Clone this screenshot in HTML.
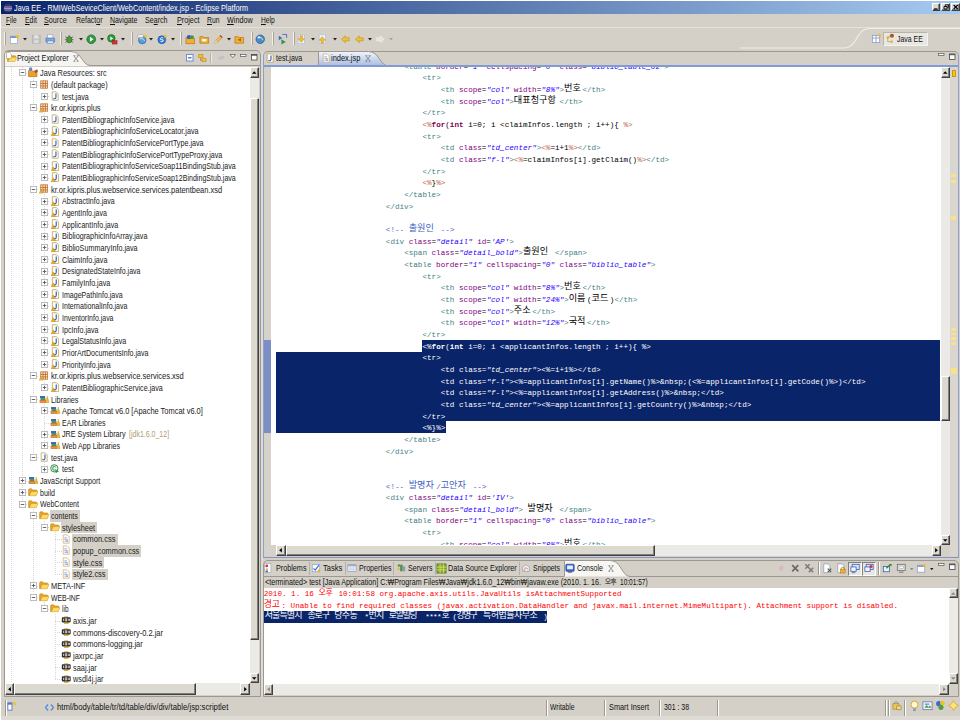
<!DOCTYPE html>
<html><head><meta charset="utf-8"><title>Java EE - Eclipse Platform</title>
<style>
html,body{margin:0;padding:0}
body{width:962px;height:722px;overflow:hidden;background:#fff;position:relative;font-family:"Liberation Sans",sans-serif;font-size:9px;color:#1c1c1c}
.b{position:absolute;box-sizing:border-box}
.t{position:absolute;white-space:pre;transform-origin:0 50%;line-height:12px;height:12px}
.t u{text-decoration:underline}
svg{position:absolute;overflow:visible}
.c{position:absolute;white-space:pre;font-family:"Liberation Mono",monospace;font-size:7.62px;line-height:11.66px;height:11.66px;color:#000;letter-spacing:0}
.k{display:inline-block;overflow:visible;vertical-align:top;font-family:"Liberation Sans","Noto Sans CJK KR",sans-serif;font-style:normal;font-weight:normal;height:11.66px;line-height:11.66px;text-align:left;white-space:nowrap;letter-spacing:0}
.kc{font-size:9.14px;line-height:6.6px}
.ka{font-size:9px;line-height:9.76px}
.tg{color:#3f7f7f}.an{color:#7f007f}.av{color:#2a00ff;font-style:italic}.cm{color:#3f5fbf}.sd{color:#bf5f3f}.kw{color:#7f0055;font-weight:bold}
.sel, .sel *{color:#fff !important}
.btn{position:absolute;box-sizing:border-box;background:#dcd9d1;border:1px solid;border-color:#fff #404040 #404040 #fff;box-shadow:inset -1px -1px 0 #808080}

</style></head>
<body>
<svg width="0" height="0" style="position:absolute">
<defs>
<symbol id="plus" viewBox="0 0 8 8"><rect x="0.500" y="0.500" width="7" height="7" fill="#fff" stroke="#b4b4b4" stroke-width="1"/><path d="M2 4h4M4 2v4" stroke="#555" stroke-width="1"/></symbol>
<symbol id="minus" viewBox="0 0 8 8"><rect x="0.500" y="0.500" width="7" height="7" fill="#fff" stroke="#b4b4b4" stroke-width="1"/><path d="M2 4h4" stroke="#555" stroke-width="1"/></symbol>
<symbol id="jfile" viewBox="0 0 10 12"><path d="M1.5 0.8h5l2.500 2.500v8h-7.500z" fill="#fffef4" stroke="#b89a58" stroke-width="0.9"/><path d="M6.2 3v4.600q0 1.800-1.600 1.800-1.100 0-1.500-0.700" fill="none" stroke="#2a5fc0" stroke-width="1.400"/></symbol>
<symbol id="jfilew" viewBox="0 0 10 12"><path d="M1.500 0.800h5l2.500 2.500v8h-7.500z" fill="#fffef4" stroke="#b89a58" stroke-width="0.900"/><path d="M6.200 3v4.600q0 1.800-1.600 1.800-1.100 0-1.500-0.700" fill="none" stroke="#2a5fc0" stroke-width="1.400"/><path d="M0 12l2.600-5 2.600 5z" fill="#f0b020" stroke="#c08000" stroke-width="0.500"/></symbol>
<symbol id="pkg" viewBox="0 0 11 11"><rect x="2" y="1" width="8" height="8.500" fill="#fbe9c4" stroke="#c07830" stroke-width="1"/><path d="M2 4h8M2 6.800h8M4.700 1v8.500M7.400 1v8.500" stroke="#b8602a" stroke-width="0.900"/><path d="M0 11l2.300-4.600 2.300 4.600z" fill="#f0b020" stroke="#c88a10" stroke-width="0.400"/></symbol>
<symbol id="pkgn" viewBox="0 0 11 11"><rect x="2" y="1" width="8" height="8.500" fill="#fbe9c4" stroke="#c07830" stroke-width="1"/><path d="M2 4h8M2 6.800h8M4.700 1v8.500M7.400 1v8.500" stroke="#b8602a" stroke-width="0.900"/></symbol>
<symbol id="fold" viewBox="0 0 12 10"><path d="M0.500 2.500q0-1.500 1.200-1.500h2.500l1 1.300h4.300q0.800 0 0.800 0.800v1h-6.500l-2.300 4.900h-1z" fill="#eaa428" stroke="#b87c10" stroke-width="0.600"/><path d="M3.600 4.200h8l-2.300 5.100h-8z" fill="#ffdc6a" stroke="#c89018" stroke-width="0.600"/></symbol>
<symbol id="jar" viewBox="0 0 12 10"><path d="M3.500 0.300h5v1h-5zM2.500 8h7l-1 2h-5z" fill="#e8b030"/><rect x="0.500" y="1.500" width="11" height="6.500" rx="1" fill="#2c2c2c"/><path d="M2.600 3.300v3M4.800 3.300h1.600v3h-1.600zM8.500 3.300v3M10 3.300v3" stroke="#f4f4f4" stroke-width="0.900" fill="none"/></symbol>
<symbol id="css" viewBox="0 0 10 12"><path d="M1.500 0.800h5l2.500 2.500v8h-7.500z" fill="#fffdf6" stroke="#c8ac78" stroke-width="0.900"/><path d="M3 4.500h3M3 6.500h4" stroke="#6a8fd8" stroke-width="0.900"/><path d="M3 8.700h2" stroke="#d870a0" stroke-width="0.900"/><circle cx="6.300" cy="8.600" r="1.100" fill="#5a8ae0"/></symbol>
<symbol id="lib" viewBox="0 0 12 10"><rect x="1" y="1.200" width="6" height="2.600" fill="#3a6ab8"/><rect x="1.600" y="3.600" width="5.800" height="2.400" fill="#3f9a55"/><rect x="0.600" y="5.800" width="7.600" height="3.400" fill="#d86a28"/><path d="M0.600 7.400h7.600" stroke="#f0c070" stroke-width="0.700"/><path d="M8 9.200l1.500-8 2.300 8z" fill="#f0b428" stroke="#c88a10" stroke-width="0.400"/></symbol>
<symbol id="cls" viewBox="0 0 11 11"><circle cx="5" cy="5" r="4.200" fill="#eaf6ea" stroke="#2e8a45" stroke-width="1.100"/><path d="M6.600 3.600q-0.600-0.800-1.700-0.800-1.800 0-1.800 2.200t1.800 2.200q1.100 0 1.700-0.800" fill="none" stroke="#2e8a45" stroke-width="1.100"/><path d="M6.500 6.500l4 2-4 2.300z" fill="#2e9a4e"/></symbol>
<symbol id="jres" viewBox="0 0 12 12"><path d="M0.500 5q0-1.500 1.200-1.500h2.500l1 1.300h4.300q0.800 0 0.800 0.800v5.400h-9.800z" fill="#e8a030" stroke="#a86a10" stroke-width="0.700"/><circle cx="3" cy="2.200" r="2" fill="#5a8ad0"/><path d="M7 4.500l3.500-2 1 2.500-3 2z" fill="#a8522a"/></symbol>
<symbol id="dd" viewBox="0 0 5 3"><path d="M0 0h5l-2.500 3z" fill="#222"/></symbol>
</defs></svg>

<div class="b" style="left:1px;top:1px;width:959px;height:719px;background:#d4d0c8;"></div>
<div class="b" style="left:1px;top:1px;width:959px;height:12.5px;background:linear-gradient(90deg,#0a246a,#a6caf0);"></div>
<svg style="left:2.5px;top:2.5px" width="10" height="10" viewBox="0 0 10 10"><circle cx="5" cy="5" r="4.300" fill="#3c3476"/><path d="M1 4h8M1 5.500h8M1.300 7h7.400" stroke="#c8c8e8" stroke-width="0.700"/></svg>
<span class="t" style="left:13.5px;top:1.6px;font-size:9px;transform:scaleX(0.8075);--w:234.00;color:#fff;">Java EE - RMIWebSeviceClient/WebContent/index.jsp - Eclipse Platform</span>
<div class="btn" style="left:931.5px;top:3px;width:8.500px;height:8px"></div>
<div class="btn" style="left:941px;top:3px;width:8.500px;height:8px"></div>
<div class="btn" style="left:951px;top:3px;width:8.500px;height:8px"></div>
<svg style="left:931.5px;top:3px" width="29" height="8" viewBox="0 0 29 8"><path d="M2 6h3.500" stroke="#000" stroke-width="1.200"/><path d="M12 3.500h3v2.500h-3zM13.300 3.300v-1.500h3v2.500h-1.200" stroke="#000" stroke-width="0.900" fill="none"/><path d="M21.700 2l4 4M25.700 2l-4 4" stroke="#000" stroke-width="1.200"/></svg>
<span class="t" style="left:5.6px;top:14.4px;font-size:9px;transform:scaleX(0.7302);--w:10.60;color:#111;"><u>F</u>ile</span>
<span class="t" style="left:25px;top:14.4px;font-size:9px;transform:scaleX(0.7605);--w:11.80;color:#111;"><u>E</u>dit</span>
<span class="t" style="left:44.3px;top:14.4px;font-size:9px;transform:scaleX(0.7956);--w:22.70;color:#111;"><u>S</u>ource</span>
<span class="t" style="left:75.5px;top:14.4px;font-size:9px;transform:scaleX(0.7791);--w:26.50;color:#111;">Refact<u>o</u>r</span>
<span class="t" style="left:109.8px;top:14.4px;font-size:9px;transform:scaleX(0.7712);--w:27.40;color:#111;"><u>N</u>avigate</span>
<span class="t" style="left:145.3px;top:14.4px;font-size:9px;transform:scaleX(0.7886);--w:22.50;color:#111;">Se<u>a</u>rch</span>
<span class="t" style="left:176.5px;top:14.4px;font-size:9px;transform:scaleX(0.8031);--w:22.50;color:#111;"><u>P</u>roject</span>
<span class="t" style="left:206.7px;top:14.4px;font-size:9px;transform:scaleX(0.7569);--w:12.50;color:#111;"><u>R</u>un</span>
<span class="t" style="left:227px;top:14.4px;font-size:9px;transform:scaleX(0.7996);--w:25.60;color:#111;"><u>W</u>indow</span>
<span class="t" style="left:260.7px;top:14.4px;font-size:9px;transform:scaleX(0.7399);--w:13.70;color:#111;"><u>H</u>elp</span>
<div class="b" style="left:1px;top:26.5px;width:959px;height:1px;background:#e4e1da;"></div>
<div class="b" style="left:3.5px;top:32px;width:1px;height:13px;background:#f4f2ee;"></div>
<div class="b" style="left:4.5px;top:32px;width:1px;height:13px;background:#a8a49c;"></div>
<div class="b" style="left:60px;top:32px;width:1px;height:13px;background:#f4f2ee;"></div>
<div class="b" style="left:61px;top:32px;width:1px;height:13px;background:#a8a49c;"></div>
<div class="b" style="left:130.5px;top:32px;width:1px;height:13px;background:#f4f2ee;"></div>
<div class="b" style="left:131.5px;top:32px;width:1px;height:13px;background:#a8a49c;"></div>
<div class="b" style="left:180px;top:32px;width:1px;height:13px;background:#f4f2ee;"></div>
<div class="b" style="left:181px;top:32px;width:1px;height:13px;background:#a8a49c;"></div>
<div class="b" style="left:250.5px;top:32px;width:1px;height:13px;background:#f4f2ee;"></div>
<div class="b" style="left:251.5px;top:32px;width:1px;height:13px;background:#a8a49c;"></div>
<div class="b" style="left:271.5px;top:32px;width:1px;height:13px;background:#f4f2ee;"></div>
<div class="b" style="left:272.5px;top:32px;width:1px;height:13px;background:#a8a49c;"></div>
<div class="b" style="left:292.5px;top:32px;width:1px;height:13px;background:#f4f2ee;"></div>
<div class="b" style="left:293.5px;top:32px;width:1px;height:13px;background:#a8a49c;"></div>
<svg style="left:23px;top:38.300px" width="4" height="2.500" viewBox="0 0 5 3"><path d="M0 0h5l-2.500 3z" fill="#222"/></svg>
<svg style="left:78.7px;top:38.300px" width="4" height="2.500" viewBox="0 0 5 3"><path d="M0 0h5l-2.500 3z" fill="#222"/></svg>
<svg style="left:99.7px;top:38.300px" width="4" height="2.500" viewBox="0 0 5 3"><path d="M0 0h5l-2.500 3z" fill="#222"/></svg>
<svg style="left:120.9px;top:38.300px" width="4" height="2.500" viewBox="0 0 5 3"><path d="M0 0h5l-2.500 3z" fill="#222"/></svg>
<svg style="left:149.4px;top:38.300px" width="4" height="2.500" viewBox="0 0 5 3"><path d="M0 0h5l-2.500 3z" fill="#222"/></svg>
<svg style="left:170.6px;top:38.300px" width="4" height="2.500" viewBox="0 0 5 3"><path d="M0 0h5l-2.500 3z" fill="#222"/></svg>
<svg style="left:226.7px;top:38.300px" width="4" height="2.500" viewBox="0 0 5 3"><path d="M0 0h5l-2.500 3z" fill="#222"/></svg>
<svg style="left:311px;top:38.300px" width="4" height="2.500" viewBox="0 0 5 3"><path d="M0 0h5l-2.500 3z" fill="#222"/></svg>
<svg style="left:332.5px;top:38.300px" width="4" height="2.500" viewBox="0 0 5 3"><path d="M0 0h5l-2.500 3z" fill="#222"/></svg>
<svg style="left:367.5px;top:38.300px" width="4" height="2.500" viewBox="0 0 5 3"><path d="M0 0h5l-2.500 3z" fill="#222"/></svg>
<svg style="left:388.7px;top:38.300px" width="4" height="2.500" viewBox="0 0 5 3"><path d="M0 0h5l-2.500 3z" fill="#a8a49c"/></svg>
<svg style="left:8.85px;top:33.75px" width="10.5" height="10.5" viewBox="0 0 12 12"><rect x="1.500" y="2.500" width="8" height="8.500" fill="#fff" stroke="#8fa4c8" stroke-width="0.800"/><rect x="1.500" y="2.500" width="8" height="2" fill="#6f8fd0"/><path d="M9.500 0l0.900 1.800 1.600 0.300-1.300 1.200 0.400 1.700-1.600-0.900-1.600 0.900 0.400-1.700-1.300-1.200 1.600-0.300z" fill="#f0c020"/></svg>
<svg style="left:30.55px;top:33.75px" width="10.5" height="10.5" viewBox="0 0 12 12"><rect x="1.500" y="1.500" width="9" height="9" fill="#c4c4c4" stroke="#b0b0b0" stroke-width="0.800"/><rect x="3.500" y="1.500" width="5" height="3.500" fill="#e4e4e4"/><rect x="3.500" y="7" width="5" height="3.500" fill="#dcdcdc"/></svg>
<svg style="left:44.65px;top:33.75px" width="10.5" height="10.5" viewBox="0 0 12 12"><rect x="3" y="1" width="6" height="4" fill="#fff" stroke="#8aa0c8" stroke-width="0.700"/><rect x="1" y="4.500" width="10" height="5" rx="1" fill="#7ea6e0" stroke="#4a6fb0" stroke-width="0.700"/><rect x="2.500" y="8" width="7" height="2.500" fill="#dfe9f8" stroke="#4a6fb0" stroke-width="0.500"/></svg>
<svg style="left:64.35px;top:33.75px" width="10.5" height="10.5" viewBox="0 0 12 12"><ellipse cx="6" cy="6.500" rx="3" ry="3.600" fill="#4a9a3a" stroke="#2a5a20" stroke-width="0.700"/><path d="M1.500 3l2.500 2M10.500 3l-2.500 2M1 6.500h2M11 6.500h-2M1.500 10l2.500-2M10.500 10l-2.500-2M6 1v2" stroke="#3a5a30" stroke-width="0.800"/></svg>
<svg style="left:85.65px;top:33.75px" width="10.5" height="10.5" viewBox="0 0 12 12"><circle cx="6" cy="6" r="5" fill="#2f9a3f" stroke="#1c6a2a" stroke-width="0.800"/><path d="M4.500 3.200l4 2.800-4 2.800z" fill="#fff"/></svg>
<svg style="left:107.05px;top:33.75px" width="10.5" height="10.5" viewBox="0 0 12 12"><circle cx="5" cy="5" r="4.300" fill="#2f9a3f" stroke="#1c6a2a" stroke-width="0.800"/><path d="M3.800 2.800l3.200 2.200-3.200 2.200z" fill="#fff"/><rect x="6" y="7.500" width="5.500" height="4" fill="#d83030" stroke="#901818" stroke-width="0.500"/></svg>
<svg style="left:136.55px;top:33.75px" width="10.5" height="10.5" viewBox="0 0 12 12"><circle cx="6" cy="7" r="4.300" fill="#5a9ae0" stroke="#2a5aa0" stroke-width="0.700"/><path d="M3 6q2-2 4 0t2 2" stroke="#bfe0a0" stroke-width="1.200" fill="none"/><rect x="1" y="1" width="6" height="3" fill="#f4f4f4" stroke="#999" stroke-width="0.500"/><path d="M9.500 0l0.700 1.500 1.600 0.200-1.200 1.100 0.300 1.600-1.400-0.800-1.400 0.800 0.300-1.600-1.200-1.100 1.600-0.200z" fill="#f0c020"/></svg>
<svg style="left:157.35px;top:33.75px" width="10.5" height="10.5" viewBox="0 0 12 12"><circle cx="5.500" cy="6.500" r="4.500" fill="#3a7ad8" stroke="#1c4a98" stroke-width="0.700"/><path d="M7 4.500q-2-1-3 0.500t1.500 1.500 1.500 1.500-3 0.500" stroke="#fff" stroke-width="1" fill="none"/><path d="M9.500 0l0.700 1.500 1.600 0.200-1.200 1.100 0.300 1.600-1.400-0.800-1.400 0.800 0.300-1.600-1.200-1.100 1.600-0.200z" fill="#f0c020"/></svg>
<svg style="left:185.25px;top:33.75px" width="10.5" height="10.5" viewBox="0 0 12 12"><path d="M1 4h4l1 1h5v6h-10z" fill="#f0b030" stroke="#a87010" stroke-width="0.700"/><circle cx="4.500" cy="3.500" r="2.500" fill="#3a5ac0"/><circle cx="8" cy="3.500" r="2.200" fill="#3a9a4a"/></svg>
<svg style="left:198.95px;top:33.75px" width="10.5" height="10.5" viewBox="0 0 12 12"><path d="M1 3h4l1 1h5v6.500h-10z" fill="#f0b030" stroke="#a87010" stroke-width="0.700"/><rect x="3" y="5.500" width="6" height="3.500" fill="#fff7d8" stroke="#c89a30" stroke-width="0.500"/></svg>
<svg style="left:212.75px;top:33.75px" width="10.5" height="10.5" viewBox="0 0 12 12"><path d="M2 10.500l1-3 5.500-5.500 2 2-5.500 5.500z" fill="#f0c060" stroke="#b88020" stroke-width="0.700"/><path d="M2 10.500l1-3 2 2z" fill="#e8e0d0"/><path d="M8 1.500l2.500 2.500" stroke="#c04020" stroke-width="1.300"/></svg>
<svg style="left:234.25px;top:33.75px" width="10.5" height="10.5" viewBox="0 0 12 12"><path d="M1 3h4l1 1h5v6.500h-10z" fill="#f0b030" stroke="#a87010" stroke-width="0.700"/><path d="M4 6.500l4-2v4z" fill="#c06010"/></svg>
<svg style="left:255.25px;top:33.75px" width="10.5" height="10.5" viewBox="0 0 12 12"><circle cx="6" cy="6" r="4.800" fill="#4a8ad8" stroke="#2a4a90" stroke-width="0.800"/><path d="M3 5q2-2.500 4-0.500t2 2.500" stroke="#a8e090" stroke-width="1.400" fill="none"/><ellipse cx="4.500" cy="3.800" rx="1.500" ry="1" fill="#dff"/></svg>
<svg style="left:276.75px;top:33.75px" width="10.5" height="10.5" viewBox="0 0 12 12"><path d="M2 2l4 2.500-4 2.500z" fill="#3a6ac8"/><path d="M5 6l5 3-5 3z" fill="#2f9a3f"/><path d="M6 0.500h5v4" stroke="#3a6ac8" stroke-width="1" fill="none"/></svg>
<svg style="left:296.45px;top:33.75px" width="10.5" height="10.5" viewBox="0 0 12 12"><rect x="2.500" y="1" width="7" height="10" fill="#eef3fb" stroke="#a8b8d8" stroke-width="0.600"/><path d="M4.500 2h3v3.500h2l-3.500 4-3.500-4h2z" fill="#f0c030" stroke="#b88a10" stroke-width="0.500"/></svg>
<svg style="left:317.25px;top:33.75px" width="10.5" height="10.5" viewBox="0 0 12 12"><rect x="2.500" y="1" width="7" height="10" fill="#eef3fb" stroke="#a8b8d8" stroke-width="0.600"/><path d="M4.500 10.500h3v-3.500h2l-3.500-4-3.500 4h2z" fill="#f0c030" stroke="#b88a10" stroke-width="0.500"/></svg>
<svg style="left:340.25px;top:33.75px" width="10.5" height="10.5" viewBox="0 0 12 12"><path d="M1.500 6l4.500-4v2.300h4.500v3.400h-4.500v2.300z" fill="#f0c030" stroke="#b88a10" stroke-width="0.600"/><path d="M8 2l1 1" stroke="#f0c030"/></svg>
<svg style="left:353.75px;top:33.75px" width="10.5" height="10.5" viewBox="0 0 12 12"><path d="M1.500 6l4.500-4v2.300h4.500v3.400h-4.500v2.300z" fill="#f0c030" stroke="#b88a10" stroke-width="0.600"/></svg>
<svg style="left:374.75px;top:33.75px" width="10.5" height="10.5" viewBox="0 0 12 12"><path d="M10.500 6l-4.500-4v2.300h-4.500v3.400h4.500v2.300z" fill="#e6e3dc" stroke="#f4f2ee" stroke-width="0.600"/></svg>
<svg style="left:740px;top:27px" width="220" height="24" viewBox="0 0 220 24"><path d="M0 21h104q7 0 11.500-7.500l3-5q4-7 11-7h91" fill="none" stroke="#efede8" stroke-width="1.200"/></svg>
<svg style="left:871px;top:33.3px" width="11" height="11" viewBox="0 0 12 12"><rect x="1.500" y="2.500" width="8" height="8" fill="#fff" stroke="#8898b8" stroke-width="0.800"/><path d="M1.500 5.500h8M5.500 2.500v8" stroke="#6f8fd0" stroke-width="0.800"/><path d="M9.500 0l0.700 1.500 1.600 0.200-1.200 1.100 0.300 1.600-1.400-0.800-1.400 0.800 0.300-1.600-1.200-1.100 1.600-0.200z" fill="#f0c020"/></svg>
<div class="b" style="left:883.3px;top:31.6px;width:44.7px;height:14.5px;background:#e9e7e1;border:1px solid;border-color:#b8b4aa #f4f2ee #f4f2ee #b8b4aa;"></div>
<svg style="left:885px;top:33.3px" width="11" height="11" viewBox="0 0 12 12"><circle cx="7.500" cy="3" r="2.300" fill="#a8522a"/><circle cx="3" cy="5" r="1.600" fill="#f0c840"/><circle cx="7.500" cy="9.500" r="1.600" fill="#f0c840"/><path d="M3 5v4.500h4.500M3 5l4.500-2" stroke="#a89040" stroke-width="0.700" fill="none"/></svg>
<span class="t" style="left:897.2px;top:32.9px;font-size:9px;transform:scaleX(0.7694);--w:25.80;color:#111;">Java EE</span>
<div class="b" style="left:3.5px;top:50px;width:257px;height:646.5px;background:#d4d0c8;border:1px solid #9c988f;border-radius:5px 5px 0 0;"></div>
<svg style="left:4.500px;top:51px" width="110" height="15" viewBox="0 0 110 15"><path d="M0 15v-11q0-4 4-4h62q5 0 8 4l6 8q2 3 6 3z" fill="#f6f5f1"/><path d="M0 0.500h66q5 0 8 3.500l6 8q2 2.500 6 2.500h170" fill="none" stroke="#9c988f" stroke-width="1"/></svg>
<svg style="left:6.500px;top:52.500px" width="10" height="10" viewBox="0 0 12 10"><use href="#fold"/></svg>
<svg style="left:5.500px;top:51.500px" width="6" height="7" viewBox="0 0 6 7"><path d="M0.500 0.500h3l2 2v4h-5z" fill="#fff" stroke="#a89060" stroke-width="0.600"/></svg>
<span class="t" style="left:16.8px;top:52px;font-size:9px;transform:scaleX(0.8059);--w:51.60;color:#111;">Project Explorer</span>
<svg style="left:72.500px;top:54.500px" width="6" height="7" viewBox="0 0 6 7"><path d="M0.700 0.700l4.600 5.600M5.300 0.700l-4.600 5.600M0.700 0.700h1.600M3.700 0.700h1.600M0.700 6.300h1.600M3.700 6.300h1.600" stroke="#6a6a6a" stroke-width="0.700" fill="none"/></svg>
<svg style="left:185px;top:52px" width="72" height="12" viewBox="0 0 72 12"><rect x="1.500" y="2.500" width="6.500" height="6.500" fill="#fff" stroke="#6f8fd0" stroke-width="1"/><path d="M3 5.800h3.500" stroke="#3a5aa8" stroke-width="1.200"/><path d="M13.500 2.500h4.500v3h-4.500zM17 6.500h4v3h-4z" fill="#f0c040" stroke="#b8860b" stroke-width="0.600"/><path d="M15.500 6v2.500h1.500" stroke="#b8860b" stroke-width="0.800" fill="none"/><path d="M25.500 1v10" stroke="#a8a49c" stroke-width="0.800"/><path d="M26.500 1v10" stroke="#f4f2ee" stroke-width="0.800"/><path d="M32.500 6l3-1.500v4z" fill="#c4c0b8"/><rect x="35.500" y="4" width="3" height="3" fill="#b8c0d4"/><path d="M45 2.500h5.500l-2.750 3.200z" fill="#f4f2ec" stroke="#555" stroke-width="0.700"/><rect x="55.500" y="2.500" width="5.500" height="2" fill="#fff" stroke="#555" stroke-width="0.700"/></svg>
<svg style="left:250.500px;top:54px" width="7" height="7" viewBox="0 0 7 7"><rect x="0.500" y="0.500" width="5.500" height="5.500" fill="#fff" stroke="#444" stroke-width="0.800"/><path d="M0.500 1.200h5.500" stroke="#444" stroke-width="1"/></svg>
<div class="b" style="left:4.5px;top:66.5px;width:245px;height:616.5px;background:#fff;"></div>
<div class="b" style="left:249.5px;top:66.5px;width:9.5px;height:616.5px;background:#eceae6;"></div>
<div class="btn" style="left:249.500px;top:67.300px;width:9.500px;height:11px"></div>
<svg style="left:252px;top:71.300px" width="4.500" height="3" viewBox="0 0 5 3"><path d="M0 3h5l-2.500-3z" fill="#000"/></svg>
<div class="btn" style="left:249.500px;top:98.300px;width:9.500px;height:542px"></div>
<div class="btn" style="left:249.500px;top:672.500px;width:9.500px;height:10.500px"></div>
<svg style="left:252px;top:676.500px" width="4.500" height="3" viewBox="0 0 5 3"><path d="M0 0h5l-2.500 3z" fill="#000"/></svg>
<div class="b" style="left:4.5px;top:683px;width:245px;height:12px;background:#eceae6;"></div>
<div class="btn" style="left:4.500px;top:683px;width:9.500px;height:11.500px"></div>
<svg style="left:8px;top:686.500px" width="3" height="4.500" viewBox="0 0 3 5"><path d="M3 0v5l-3-2.500z" fill="#000"/></svg>
<div class="btn" style="left:14px;top:683px;width:181.500px;height:11.500px"></div>
<div class="btn" style="left:240px;top:683px;width:9.500px;height:11.500px"></div>
<svg style="left:243.500px;top:686.500px" width="3" height="4.500" viewBox="0 0 3 5"><path d="M0 0v5l3-2.500z" fill="#000"/></svg>
<div class="b" style="left:249.5px;top:683px;width:9.5px;height:12px;background:#d4d0c8;"></div>
<div class="b" style="left:11.3px;top:66.5px;width:1px;height:616.5px;background:repeating-linear-gradient(180deg,#d8d8d8 0 1px,transparent 1px 2px);"></div>
<div class="b" style="left:26.3px;top:72.9px;width:2px;height:1px;background:repeating-linear-gradient(90deg,#d8d8d8 0 1px,transparent 1px 2px);"></div>
<div class="b" style="left:33.3px;top:77.9px;width:1px;height:375.582px;background:repeating-linear-gradient(180deg,#d8d8d8 0 1px,transparent 1px 2px);"></div>
<div class="b" style="left:37.3px;top:84.554px;width:2px;height:1px;background:repeating-linear-gradient(90deg,#d8d8d8 0 1px,transparent 1px 2px);"></div>
<div class="b" style="left:44.3px;top:89.554px;width:1px;height:2.654px;background:repeating-linear-gradient(180deg,#d8d8d8 0 1px,transparent 1px 2px);"></div>
<div class="b" style="left:48.3px;top:96.208px;width:2px;height:1px;background:repeating-linear-gradient(90deg,#d8d8d8 0 1px,transparent 1px 2px);"></div>
<div class="b" style="left:37.3px;top:107.862px;width:2px;height:1px;background:repeating-linear-gradient(90deg,#d8d8d8 0 1px,transparent 1px 2px);"></div>
<div class="b" style="left:44.3px;top:112.862px;width:1px;height:60.924px;background:repeating-linear-gradient(180deg,#d8d8d8 0 1px,transparent 1px 2px);"></div>
<div class="b" style="left:48.3px;top:119.516px;width:2px;height:1px;background:repeating-linear-gradient(90deg,#d8d8d8 0 1px,transparent 1px 2px);"></div>
<div class="b" style="left:48.3px;top:131.17px;width:2px;height:1px;background:repeating-linear-gradient(90deg,#d8d8d8 0 1px,transparent 1px 2px);"></div>
<div class="b" style="left:48.3px;top:142.824px;width:2px;height:1px;background:repeating-linear-gradient(90deg,#d8d8d8 0 1px,transparent 1px 2px);"></div>
<div class="b" style="left:48.3px;top:154.478px;width:2px;height:1px;background:repeating-linear-gradient(90deg,#d8d8d8 0 1px,transparent 1px 2px);"></div>
<div class="b" style="left:48.3px;top:166.132px;width:2px;height:1px;background:repeating-linear-gradient(90deg,#d8d8d8 0 1px,transparent 1px 2px);"></div>
<div class="b" style="left:48.3px;top:177.786px;width:2px;height:1px;background:repeating-linear-gradient(90deg,#d8d8d8 0 1px,transparent 1px 2px);"></div>
<div class="b" style="left:37.3px;top:189.44px;width:2px;height:1px;background:repeating-linear-gradient(90deg,#d8d8d8 0 1px,transparent 1px 2px);"></div>
<div class="b" style="left:44.3px;top:194.44px;width:1px;height:165.81px;background:repeating-linear-gradient(180deg,#d8d8d8 0 1px,transparent 1px 2px);"></div>
<div class="b" style="left:48.3px;top:201.094px;width:2px;height:1px;background:repeating-linear-gradient(90deg,#d8d8d8 0 1px,transparent 1px 2px);"></div>
<div class="b" style="left:48.3px;top:212.748px;width:2px;height:1px;background:repeating-linear-gradient(90deg,#d8d8d8 0 1px,transparent 1px 2px);"></div>
<div class="b" style="left:48.3px;top:224.402px;width:2px;height:1px;background:repeating-linear-gradient(90deg,#d8d8d8 0 1px,transparent 1px 2px);"></div>
<div class="b" style="left:48.3px;top:236.056px;width:2px;height:1px;background:repeating-linear-gradient(90deg,#d8d8d8 0 1px,transparent 1px 2px);"></div>
<div class="b" style="left:48.3px;top:247.71px;width:2px;height:1px;background:repeating-linear-gradient(90deg,#d8d8d8 0 1px,transparent 1px 2px);"></div>
<div class="b" style="left:48.3px;top:259.364px;width:2px;height:1px;background:repeating-linear-gradient(90deg,#d8d8d8 0 1px,transparent 1px 2px);"></div>
<div class="b" style="left:48.3px;top:271.018px;width:2px;height:1px;background:repeating-linear-gradient(90deg,#d8d8d8 0 1px,transparent 1px 2px);"></div>
<div class="b" style="left:48.3px;top:282.672px;width:2px;height:1px;background:repeating-linear-gradient(90deg,#d8d8d8 0 1px,transparent 1px 2px);"></div>
<div class="b" style="left:48.3px;top:294.326px;width:2px;height:1px;background:repeating-linear-gradient(90deg,#d8d8d8 0 1px,transparent 1px 2px);"></div>
<div class="b" style="left:48.3px;top:305.98px;width:2px;height:1px;background:repeating-linear-gradient(90deg,#d8d8d8 0 1px,transparent 1px 2px);"></div>
<div class="b" style="left:48.3px;top:317.634px;width:2px;height:1px;background:repeating-linear-gradient(90deg,#d8d8d8 0 1px,transparent 1px 2px);"></div>
<div class="b" style="left:48.3px;top:329.288px;width:2px;height:1px;background:repeating-linear-gradient(90deg,#d8d8d8 0 1px,transparent 1px 2px);"></div>
<div class="b" style="left:48.3px;top:340.942px;width:2px;height:1px;background:repeating-linear-gradient(90deg,#d8d8d8 0 1px,transparent 1px 2px);"></div>
<div class="b" style="left:48.3px;top:352.596px;width:2px;height:1px;background:repeating-linear-gradient(90deg,#d8d8d8 0 1px,transparent 1px 2px);"></div>
<div class="b" style="left:48.3px;top:364.25px;width:2px;height:1px;background:repeating-linear-gradient(90deg,#d8d8d8 0 1px,transparent 1px 2px);"></div>
<div class="b" style="left:37.3px;top:375.904px;width:2px;height:1px;background:repeating-linear-gradient(90deg,#d8d8d8 0 1px,transparent 1px 2px);"></div>
<div class="b" style="left:44.3px;top:380.904px;width:1px;height:2.654px;background:repeating-linear-gradient(180deg,#d8d8d8 0 1px,transparent 1px 2px);"></div>
<div class="b" style="left:48.3px;top:387.558px;width:2px;height:1px;background:repeating-linear-gradient(90deg,#d8d8d8 0 1px,transparent 1px 2px);"></div>
<div class="b" style="left:37.3px;top:399.212px;width:2px;height:1px;background:repeating-linear-gradient(90deg,#d8d8d8 0 1px,transparent 1px 2px);"></div>
<div class="b" style="left:44.3px;top:404.212px;width:1px;height:37.616px;background:repeating-linear-gradient(180deg,#d8d8d8 0 1px,transparent 1px 2px);"></div>
<div class="b" style="left:48.3px;top:410.866px;width:2px;height:1px;background:repeating-linear-gradient(90deg,#d8d8d8 0 1px,transparent 1px 2px);"></div>
<div class="b" style="left:48.3px;top:422.52px;width:3px;height:1px;background:repeating-linear-gradient(90deg,#d8d8d8 0 1px,transparent 1px 2px);"></div>
<div class="b" style="left:44.3px;top:422.52px;width:7px;height:1px;background:repeating-linear-gradient(90deg,#d8d8d8 0 1px,transparent 1px 2px);"></div>
<div class="b" style="left:48.3px;top:434.174px;width:2px;height:1px;background:repeating-linear-gradient(90deg,#d8d8d8 0 1px,transparent 1px 2px);"></div>
<div class="b" style="left:48.3px;top:445.828px;width:2px;height:1px;background:repeating-linear-gradient(90deg,#d8d8d8 0 1px,transparent 1px 2px);"></div>
<div class="b" style="left:37.3px;top:457.482px;width:2px;height:1px;background:repeating-linear-gradient(90deg,#d8d8d8 0 1px,transparent 1px 2px);"></div>
<div class="b" style="left:44.3px;top:462.482px;width:1px;height:2.654px;background:repeating-linear-gradient(180deg,#d8d8d8 0 1px,transparent 1px 2px);"></div>
<div class="b" style="left:48.3px;top:469.136px;width:2px;height:1px;background:repeating-linear-gradient(90deg,#d8d8d8 0 1px,transparent 1px 2px);"></div>
<div class="b" style="left:26.3px;top:480.79px;width:2px;height:1px;background:repeating-linear-gradient(90deg,#d8d8d8 0 1px,transparent 1px 2px);"></div>
<div class="b" style="left:26.3px;top:492.444px;width:2px;height:1px;background:repeating-linear-gradient(90deg,#d8d8d8 0 1px,transparent 1px 2px);"></div>
<div class="b" style="left:26.3px;top:504.098px;width:2px;height:1px;background:repeating-linear-gradient(90deg,#d8d8d8 0 1px,transparent 1px 2px);"></div>
<div class="b" style="left:33.3px;top:509.098px;width:1px;height:84.232px;background:repeating-linear-gradient(180deg,#d8d8d8 0 1px,transparent 1px 2px);"></div>
<div class="b" style="left:37.3px;top:515.752px;width:2px;height:1px;background:repeating-linear-gradient(90deg,#d8d8d8 0 1px,transparent 1px 2px);"></div>
<div class="b" style="left:44.3px;top:520.752px;width:1px;height:2.654px;background:repeating-linear-gradient(180deg,#d8d8d8 0 1px,transparent 1px 2px);"></div>
<div class="b" style="left:48.3px;top:527.406px;width:2px;height:1px;background:repeating-linear-gradient(90deg,#d8d8d8 0 1px,transparent 1px 2px);"></div>
<div class="b" style="left:55.3px;top:532.406px;width:1px;height:41.616px;background:repeating-linear-gradient(180deg,#d8d8d8 0 1px,transparent 1px 2px);"></div>
<div class="b" style="left:59.3px;top:539.06px;width:3px;height:1px;background:repeating-linear-gradient(90deg,#d8d8d8 0 1px,transparent 1px 2px);"></div>
<div class="b" style="left:55.3px;top:539.06px;width:7px;height:1px;background:repeating-linear-gradient(90deg,#d8d8d8 0 1px,transparent 1px 2px);"></div>
<div class="b" style="left:59.3px;top:550.714px;width:3px;height:1px;background:repeating-linear-gradient(90deg,#d8d8d8 0 1px,transparent 1px 2px);"></div>
<div class="b" style="left:55.3px;top:550.714px;width:7px;height:1px;background:repeating-linear-gradient(90deg,#d8d8d8 0 1px,transparent 1px 2px);"></div>
<div class="b" style="left:59.3px;top:562.368px;width:3px;height:1px;background:repeating-linear-gradient(90deg,#d8d8d8 0 1px,transparent 1px 2px);"></div>
<div class="b" style="left:55.3px;top:562.368px;width:7px;height:1px;background:repeating-linear-gradient(90deg,#d8d8d8 0 1px,transparent 1px 2px);"></div>
<div class="b" style="left:59.3px;top:574.022px;width:3px;height:1px;background:repeating-linear-gradient(90deg,#d8d8d8 0 1px,transparent 1px 2px);"></div>
<div class="b" style="left:55.3px;top:574.022px;width:7px;height:1px;background:repeating-linear-gradient(90deg,#d8d8d8 0 1px,transparent 1px 2px);"></div>
<div class="b" style="left:37.3px;top:585.676px;width:2px;height:1px;background:repeating-linear-gradient(90deg,#d8d8d8 0 1px,transparent 1px 2px);"></div>
<div class="b" style="left:37.3px;top:597.33px;width:2px;height:1px;background:repeating-linear-gradient(90deg,#d8d8d8 0 1px,transparent 1px 2px);"></div>
<div class="b" style="left:44.3px;top:602.33px;width:1px;height:2.654px;background:repeating-linear-gradient(180deg,#d8d8d8 0 1px,transparent 1px 2px);"></div>
<div class="b" style="left:48.3px;top:608.984px;width:2px;height:1px;background:repeating-linear-gradient(90deg,#d8d8d8 0 1px,transparent 1px 2px);"></div>
<div class="b" style="left:55.3px;top:613.984px;width:1px;height:64.924px;background:repeating-linear-gradient(180deg,#d8d8d8 0 1px,transparent 1px 2px);"></div>
<div class="b" style="left:59.3px;top:620.638px;width:3px;height:1px;background:repeating-linear-gradient(90deg,#d8d8d8 0 1px,transparent 1px 2px);"></div>
<div class="b" style="left:55.3px;top:620.638px;width:7px;height:1px;background:repeating-linear-gradient(90deg,#d8d8d8 0 1px,transparent 1px 2px);"></div>
<div class="b" style="left:59.3px;top:632.292px;width:3px;height:1px;background:repeating-linear-gradient(90deg,#d8d8d8 0 1px,transparent 1px 2px);"></div>
<div class="b" style="left:55.3px;top:632.292px;width:7px;height:1px;background:repeating-linear-gradient(90deg,#d8d8d8 0 1px,transparent 1px 2px);"></div>
<div class="b" style="left:59.3px;top:643.946px;width:3px;height:1px;background:repeating-linear-gradient(90deg,#d8d8d8 0 1px,transparent 1px 2px);"></div>
<div class="b" style="left:55.3px;top:643.946px;width:7px;height:1px;background:repeating-linear-gradient(90deg,#d8d8d8 0 1px,transparent 1px 2px);"></div>
<div class="b" style="left:59.3px;top:655.6px;width:3px;height:1px;background:repeating-linear-gradient(90deg,#d8d8d8 0 1px,transparent 1px 2px);"></div>
<div class="b" style="left:55.3px;top:655.6px;width:7px;height:1px;background:repeating-linear-gradient(90deg,#d8d8d8 0 1px,transparent 1px 2px);"></div>
<div class="b" style="left:59.3px;top:667.254px;width:3px;height:1px;background:repeating-linear-gradient(90deg,#d8d8d8 0 1px,transparent 1px 2px);"></div>
<div class="b" style="left:55.3px;top:667.254px;width:7px;height:1px;background:repeating-linear-gradient(90deg,#d8d8d8 0 1px,transparent 1px 2px);"></div>
<div class="b" style="left:59.3px;top:678.908px;width:3px;height:1px;background:repeating-linear-gradient(90deg,#d8d8d8 0 1px,transparent 1px 2px);"></div>
<div class="b" style="left:55.3px;top:678.908px;width:7px;height:1px;background:repeating-linear-gradient(90deg,#d8d8d8 0 1px,transparent 1px 2px);"></div>
<div class="b" style="left:22.3px;top:66.5px;width:1px;height:433.598px;background:repeating-linear-gradient(180deg,#d8d8d8 0 1px,transparent 1px 2px);"></div>
<svg style="left:18.8px;top:69.4px" width="7" height="7" viewBox="0 0 8 8"><use href="#minus"/></svg>
<svg style="left:27.75px;top:67.35px" width="10.5" height="10.5"><use href="#jres" width="10.5" height="10.5"/></svg>
<span class="t" style="left:40.2px;top:67.2px;font-size:9px;transform:scaleX(0.8169);--w:66.60;color:#1a1a1a;">Java Resources: src</span>
<svg style="left:29.8px;top:81.054px" width="7" height="7" viewBox="0 0 8 8"><use href="#minus"/></svg>
<svg style="left:39.25px;top:79.504px" width="9.5" height="9.5"><use href="#pkgn" width="9.5" height="9.5"/></svg>
<span class="t" style="left:51.2px;top:78.854px;font-size:9px;transform:scaleX(0.8138);--w:56.60;color:#1a1a1a;">(default package)</span>
<svg style="left:40.8px;top:92.708px" width="7" height="7" viewBox="0 0 8 8"><use href="#plus"/></svg>
<svg style="left:51px;top:90.908px" width="8" height="10"><use href="#jfile" width="8" height="10"/></svg>
<span class="t" style="left:62.2px;top:90.508px;font-size:9px;transform:scaleX(0.7993);--w:26.80;color:#1a1a1a;">test.java</span>
<svg style="left:29.8px;top:104.362px" width="7" height="7" viewBox="0 0 8 8"><use href="#minus"/></svg>
<svg style="left:39.25px;top:102.812px" width="9.5" height="9.5"><use href="#pkg" width="9.5" height="9.5"/></svg>
<span class="t" style="left:51.2px;top:102.162px;font-size:9px;transform:scaleX(0.8332);--w:49.60;color:#1a1a1a;">kr.or.kipris.plus</span>
<svg style="left:40.8px;top:116.016px" width="7" height="7" viewBox="0 0 8 8"><use href="#plus"/></svg>
<svg style="left:51px;top:114.216px" width="8" height="10"><use href="#jfile" width="8" height="10"/></svg>
<span class="t" style="left:62.2px;top:113.816px;font-size:9px;transform:scaleX(0.7938);--w:112.40;color:#1a1a1a;">PatentBibliographicInfoService.java</span>
<svg style="left:40.8px;top:127.67px" width="7" height="7" viewBox="0 0 8 8"><use href="#plus"/></svg>
<svg style="left:50.75px;top:125.87px" width="8.5" height="10"><use href="#jfilew" width="8.5" height="10"/></svg>
<span class="t" style="left:62.2px;top:125.47px;font-size:9px;transform:scaleX(0.7977);--w:136.50;color:#1a1a1a;">PatentBibliographicInfoServiceLocator.java</span>
<svg style="left:40.8px;top:139.324px" width="7" height="7" viewBox="0 0 8 8"><use href="#plus"/></svg>
<svg style="left:51px;top:137.524px" width="8" height="10"><use href="#jfile" width="8" height="10"/></svg>
<span class="t" style="left:62.2px;top:137.124px;font-size:9px;transform:scaleX(0.7973);--w:141.60;color:#1a1a1a;">PatentBibliographicInfoServicePortType.java</span>
<svg style="left:40.8px;top:150.978px" width="7" height="7" viewBox="0 0 8 8"><use href="#plus"/></svg>
<svg style="left:51px;top:149.178px" width="8" height="10"><use href="#jfile" width="8" height="10"/></svg>
<span class="t" style="left:62.2px;top:148.778px;font-size:9px;transform:scaleX(0.8022);--w:160.40;color:#1a1a1a;">PatentBibliographicInfoServicePortTypeProxy.java</span>
<svg style="left:40.8px;top:162.632px" width="7" height="7" viewBox="0 0 8 8"><use href="#plus"/></svg>
<svg style="left:50.75px;top:160.832px" width="8.5" height="10"><use href="#jfilew" width="8.5" height="10"/></svg>
<span class="t" style="left:62.2px;top:160.432px;font-size:9px;transform:scaleX(0.7883);--w:173.80;color:#1a1a1a;">PatentBibliographicInfoServiceSoap11BindingStub.java</span>
<svg style="left:40.8px;top:174.286px" width="7" height="7" viewBox="0 0 8 8"><use href="#plus"/></svg>
<svg style="left:50.75px;top:172.486px" width="8.5" height="10"><use href="#jfilew" width="8.5" height="10"/></svg>
<span class="t" style="left:62.2px;top:172.086px;font-size:9px;transform:scaleX(0.7859);--w:173.80;color:#1a1a1a;">PatentBibliographicInfoServiceSoap12BindingStub.java</span>
<svg style="left:29.8px;top:185.94px" width="7" height="7" viewBox="0 0 8 8"><use href="#minus"/></svg>
<svg style="left:39.25px;top:184.39px" width="9.5" height="9.5"><use href="#pkg" width="9.5" height="9.5"/></svg>
<span class="t" style="left:51.2px;top:183.74px;font-size:9px;transform:scaleX(0.8281);--w:171.10;color:#1a1a1a;">kr.or.kipris.plus.webservice.services.patentbean.xsd</span>
<svg style="left:40.8px;top:197.594px" width="7" height="7" viewBox="0 0 8 8"><use href="#plus"/></svg>
<svg style="left:50.75px;top:195.794px" width="8.5" height="10"><use href="#jfilew" width="8.5" height="10"/></svg>
<span class="t" style="left:62.2px;top:195.394px;font-size:9px;transform:scaleX(0.7845);--w:52.60;color:#1a1a1a;">AbstractInfo.java</span>
<svg style="left:40.8px;top:209.248px" width="7" height="7" viewBox="0 0 8 8"><use href="#plus"/></svg>
<svg style="left:50.75px;top:207.448px" width="8.5" height="10"><use href="#jfilew" width="8.5" height="10"/></svg>
<span class="t" style="left:62.2px;top:207.048px;font-size:9px;transform:scaleX(0.7785);--w:44.80;color:#1a1a1a;">AgentInfo.java</span>
<svg style="left:40.8px;top:220.902px" width="7" height="7" viewBox="0 0 8 8"><use href="#plus"/></svg>
<svg style="left:50.75px;top:219.102px" width="8.5" height="10"><use href="#jfilew" width="8.5" height="10"/></svg>
<span class="t" style="left:62.2px;top:218.702px;font-size:9px;transform:scaleX(0.7910);--w:56.20;color:#1a1a1a;">ApplicantInfo.java</span>
<svg style="left:40.8px;top:232.556px" width="7" height="7" viewBox="0 0 8 8"><use href="#plus"/></svg>
<svg style="left:50.75px;top:230.756px" width="8.5" height="10"><use href="#jfilew" width="8.5" height="10"/></svg>
<span class="t" style="left:62.2px;top:230.356px;font-size:9px;transform:scaleX(0.8027);--w:85.40;color:#1a1a1a;">BibliographicInfoArray.java</span>
<svg style="left:40.8px;top:244.21px" width="7" height="7" viewBox="0 0 8 8"><use href="#plus"/></svg>
<svg style="left:50.75px;top:242.41px" width="8.5" height="10"><use href="#jfilew" width="8.5" height="10"/></svg>
<span class="t" style="left:62.2px;top:242.01px;font-size:9px;transform:scaleX(0.7996);--w:75.60;color:#1a1a1a;">BiblioSummaryInfo.java</span>
<svg style="left:40.8px;top:255.864px" width="7" height="7" viewBox="0 0 8 8"><use href="#plus"/></svg>
<svg style="left:50.75px;top:254.064px" width="8.5" height="10"><use href="#jfilew" width="8.5" height="10"/></svg>
<span class="t" style="left:62.2px;top:253.664px;font-size:9px;transform:scaleX(0.7961);--w:45.40;color:#1a1a1a;">ClaimInfo.java</span>
<svg style="left:40.8px;top:267.518px" width="7" height="7" viewBox="0 0 8 8"><use href="#plus"/></svg>
<svg style="left:50.75px;top:265.718px" width="8.5" height="10"><use href="#jfilew" width="8.5" height="10"/></svg>
<span class="t" style="left:62.2px;top:265.318px;font-size:9px;transform:scaleX(0.7805);--w:78.50;color:#1a1a1a;">DesignatedStateInfo.java</span>
<svg style="left:40.8px;top:279.172px" width="7" height="7" viewBox="0 0 8 8"><use href="#plus"/></svg>
<svg style="left:50.75px;top:277.372px" width="8.5" height="10"><use href="#jfilew" width="8.5" height="10"/></svg>
<span class="t" style="left:62.2px;top:276.972px;font-size:9px;transform:scaleX(0.7979);--w:48.30;color:#1a1a1a;">FamilyInfo.java</span>
<svg style="left:40.8px;top:290.826px" width="7" height="7" viewBox="0 0 8 8"><use href="#plus"/></svg>
<svg style="left:50.75px;top:289.026px" width="8.5" height="10"><use href="#jfilew" width="8.5" height="10"/></svg>
<span class="t" style="left:62.2px;top:288.626px;font-size:9px;transform:scaleX(0.7826);--w:60.70;color:#1a1a1a;">ImagePathInfo.java</span>
<svg style="left:40.8px;top:302.48px" width="7" height="7" viewBox="0 0 8 8"><use href="#plus"/></svg>
<svg style="left:50.75px;top:300.68px" width="8.5" height="10"><use href="#jfilew" width="8.5" height="10"/></svg>
<span class="t" style="left:62.2px;top:300.28px;font-size:9px;transform:scaleX(0.7838);--w:65.50;color:#1a1a1a;">InternationalInfo.java</span>
<svg style="left:40.8px;top:314.134px" width="7" height="7" viewBox="0 0 8 8"><use href="#plus"/></svg>
<svg style="left:50.75px;top:312.334px" width="8.5" height="10"><use href="#jfilew" width="8.5" height="10"/></svg>
<span class="t" style="left:62.2px;top:311.934px;font-size:9px;transform:scaleX(0.7739);--w:51.50;color:#1a1a1a;">InventorInfo.java</span>
<svg style="left:40.8px;top:325.788px" width="7" height="7" viewBox="0 0 8 8"><use href="#plus"/></svg>
<svg style="left:50.75px;top:323.988px" width="8.5" height="10"><use href="#jfilew" width="8.5" height="10"/></svg>
<span class="t" style="left:62.2px;top:323.588px;font-size:9px;transform:scaleX(0.7929);--w:36.50;color:#1a1a1a;">IpcInfo.java</span>
<svg style="left:40.8px;top:337.442px" width="7" height="7" viewBox="0 0 8 8"><use href="#plus"/></svg>
<svg style="left:50.75px;top:335.642px" width="8.5" height="10"><use href="#jfilew" width="8.5" height="10"/></svg>
<span class="t" style="left:62.2px;top:335.242px;font-size:9px;transform:scaleX(0.7871);--w:64.20;color:#1a1a1a;">LegalStatusInfo.java</span>
<svg style="left:40.8px;top:349.096px" width="7" height="7" viewBox="0 0 8 8"><use href="#plus"/></svg>
<svg style="left:50.75px;top:347.296px" width="8.5" height="10"><use href="#jfilew" width="8.5" height="10"/></svg>
<span class="t" style="left:62.2px;top:346.896px;font-size:9px;transform:scaleX(0.7860);--w:86.50;color:#1a1a1a;">PriorArtDocumentsInfo.java</span>
<svg style="left:40.8px;top:360.75px" width="7" height="7" viewBox="0 0 8 8"><use href="#plus"/></svg>
<svg style="left:50.75px;top:358.95px" width="8.5" height="10"><use href="#jfilew" width="8.5" height="10"/></svg>
<span class="t" style="left:62.2px;top:358.55px;font-size:9px;transform:scaleX(0.7835);--w:48.60;color:#1a1a1a;">PriorityInfo.java</span>
<svg style="left:29.8px;top:372.404px" width="7" height="7" viewBox="0 0 8 8"><use href="#minus"/></svg>
<svg style="left:39.25px;top:370.854px" width="9.5" height="9.5"><use href="#pkg" width="9.5" height="9.5"/></svg>
<span class="t" style="left:51.2px;top:370.204px;font-size:9px;transform:scaleX(0.8349);--w:132.80;color:#1a1a1a;">kr.or.kipris.plus.webservice.services.xsd</span>
<svg style="left:40.8px;top:384.058px" width="7" height="7" viewBox="0 0 8 8"><use href="#plus"/></svg>
<svg style="left:50.75px;top:382.258px" width="8.5" height="10"><use href="#jfilew" width="8.5" height="10"/></svg>
<span class="t" style="left:62.2px;top:381.858px;font-size:9px;transform:scaleX(0.7963);--w:100.80;color:#1a1a1a;">PatentBibliographicService.java</span>
<svg style="left:29.8px;top:395.712px" width="7" height="7" viewBox="0 0 8 8"><use href="#minus"/></svg>
<svg style="left:38.75px;top:394.662px" width="10.5" height="8.5"><use href="#lib" width="10.5" height="8.5"/></svg>
<span class="t" style="left:51.2px;top:393.512px;font-size:9px;transform:scaleX(0.7938);--w:27.40;color:#1a1a1a;">Libraries</span>
<svg style="left:40.8px;top:407.366px" width="7" height="7" viewBox="0 0 8 8"><use href="#plus"/></svg>
<svg style="left:49.75px;top:406.316px" width="10.5" height="8.5"><use href="#lib" width="10.5" height="8.5"/></svg>
<span class="t" style="left:62.2px;top:405.166px;font-size:9px;transform:scaleX(0.8269);--w:140.80;color:#1a1a1a;">Apache Tomcat v6.0 [Apache Tomcat v6.0]</span>
<svg style="left:49.75px;top:417.97px" width="10.5" height="8.5"><use href="#lib" width="10.5" height="8.5"/></svg>
<span class="t" style="left:62.2px;top:416.82px;font-size:9px;transform:scaleX(0.7833);--w:43.50;color:#1a1a1a;">EAR Libraries</span>
<svg style="left:40.8px;top:430.674px" width="7" height="7" viewBox="0 0 8 8"><use href="#plus"/></svg>
<svg style="left:49.75px;top:429.624px" width="10.5" height="8.5"><use href="#lib" width="10.5" height="8.5"/></svg>
<span class="t" style="left:62.2px;top:428.474px;font-size:9px;transform:scaleX(0.7997);--w:63.60;color:#1a1a1a;">JRE System Library</span>
<svg style="left:40.8px;top:442.328px" width="7" height="7" viewBox="0 0 8 8"><use href="#plus"/></svg>
<svg style="left:49.75px;top:441.278px" width="10.5" height="8.5"><use href="#lib" width="10.5" height="8.5"/></svg>
<span class="t" style="left:62.2px;top:440.128px;font-size:9px;transform:scaleX(0.7917);--w:58.10;color:#1a1a1a;">Web App Libraries</span>
<svg style="left:29.8px;top:453.982px" width="7" height="7" viewBox="0 0 8 8"><use href="#minus"/></svg>
<svg style="left:40px;top:452.182px" width="8" height="10"><use href="#jfile" width="8" height="10"/></svg>
<span class="t" style="left:51.2px;top:451.782px;font-size:9px;transform:scaleX(0.7903);--w:26.50;color:#1a1a1a;">test.java</span>
<svg style="left:40.8px;top:465.636px" width="7" height="7" viewBox="0 0 8 8"><use href="#plus"/></svg>
<svg style="left:50.25px;top:464.086px" width="9.5" height="9.5"><use href="#cls" width="9.5" height="9.5"/></svg>
<span class="t" style="left:62.2px;top:463.436px;font-size:9px;transform:scaleX(0.8060);--w:11.70;color:#1a1a1a;">test</span>
<svg style="left:18.8px;top:477.29px" width="7" height="7" viewBox="0 0 8 8"><use href="#plus"/></svg>
<svg style="left:27.75px;top:476.24px" width="10.5" height="8.5"><use href="#lib" width="10.5" height="8.5"/></svg>
<span class="t" style="left:40.2px;top:475.09px;font-size:9px;transform:scaleX(0.7929);--w:60.30;color:#1a1a1a;">JavaScript Support</span>
<svg style="left:18.8px;top:488.944px" width="7" height="7" viewBox="0 0 8 8"><use href="#plus"/></svg>
<svg style="left:27.75px;top:487.894px" width="10.5" height="8.5"><use href="#fold" width="10.5" height="8.5"/></svg>
<span class="t" style="left:40.2px;top:486.744px;font-size:9px;transform:scaleX(0.7836);--w:14.90;color:#1a1a1a;">build</span>
<svg style="left:18.8px;top:500.598px" width="7" height="7" viewBox="0 0 8 8"><use href="#minus"/></svg>
<svg style="left:27.75px;top:499.548px" width="10.5" height="8.5"><use href="#fold" width="10.5" height="8.5"/></svg>
<span class="t" style="left:40.2px;top:498.398px;font-size:9px;transform:scaleX(0.7820);--w:39.00;color:#1a1a1a;">WebContent</span>
<svg style="left:29.8px;top:512.252px" width="7" height="7" viewBox="0 0 8 8"><use href="#minus"/></svg>
<svg style="left:38.75px;top:511.202px" width="10.5" height="8.5"><use href="#fold" width="10.5" height="8.5"/></svg>
<div class="b" style="left:49.7px;top:510.252px;width:30.4px;height:11.3px;background:#d4d0c8;"></div>
<span class="t" style="left:51.2px;top:510.052px;font-size:9px;transform:scaleX(0.7904);--w:26.90;color:#1a1a1a;">contents</span>
<svg style="left:40.8px;top:523.906px" width="7" height="7" viewBox="0 0 8 8"><use href="#minus"/></svg>
<svg style="left:49.75px;top:522.856px" width="10.5" height="8.5"><use href="#fold" width="10.5" height="8.5"/></svg>
<div class="b" style="left:60.7px;top:521.906px;width:36.5px;height:11.3px;background:#d4d0c8;"></div>
<span class="t" style="left:62.2px;top:521.706px;font-size:9px;transform:scaleX(0.8142);--w:33.00;color:#1a1a1a;">stylesheet</span>
<svg style="left:62px;top:533.76px" width="8" height="10"><use href="#css" width="8" height="10"/></svg>
<div class="b" style="left:71.7px;top:533.56px;width:46.1px;height:11.3px;background:#d4d0c8;"></div>
<span class="t" style="left:73.2px;top:533.36px;font-size:9px;transform:scaleX(0.8433);--w:42.60;color:#1a1a1a;">common.css</span>
<svg style="left:62px;top:545.414px" width="8" height="10"><use href="#css" width="8" height="10"/></svg>
<div class="b" style="left:71.7px;top:545.214px;width:69.8px;height:11.3px;background:#d4d0c8;"></div>
<span class="t" style="left:73.2px;top:545.014px;font-size:9px;transform:scaleX(0.8231);--w:66.30;color:#1a1a1a;">popup_common.css</span>
<svg style="left:62px;top:557.068px" width="8" height="10"><use href="#css" width="8" height="10"/></svg>
<div class="b" style="left:71.7px;top:556.868px;width:32.8px;height:11.3px;background:#d4d0c8;"></div>
<span class="t" style="left:73.2px;top:556.668px;font-size:9px;transform:scaleX(0.8489);--w:29.30;color:#1a1a1a;">style.css</span>
<svg style="left:62px;top:568.722px" width="8" height="10"><use href="#css" width="8" height="10"/></svg>
<div class="b" style="left:71.7px;top:568.522px;width:36px;height:11.3px;background:#d4d0c8;"></div>
<span class="t" style="left:73.2px;top:568.322px;font-size:9px;transform:scaleX(0.8225);--w:32.50;color:#1a1a1a;">style2.css</span>
<svg style="left:29.8px;top:582.176px" width="7" height="7" viewBox="0 0 8 8"><use href="#plus"/></svg>
<svg style="left:38.75px;top:581.126px" width="10.5" height="8.5"><use href="#fold" width="10.5" height="8.5"/></svg>
<span class="t" style="left:51.2px;top:579.976px;font-size:9px;transform:scaleX(0.8200);--w:34.30;color:#1a1a1a;">META-INF</span>
<svg style="left:29.8px;top:593.83px" width="7" height="7" viewBox="0 0 8 8"><use href="#minus"/></svg>
<svg style="left:38.75px;top:592.78px" width="10.5" height="8.5"><use href="#fold" width="10.5" height="8.5"/></svg>
<span class="t" style="left:51.2px;top:591.63px;font-size:9px;transform:scaleX(0.7632);--w:29.00;color:#1a1a1a;">WEB-INF</span>
<svg style="left:40.8px;top:605.484px" width="7" height="7" viewBox="0 0 8 8"><use href="#minus"/></svg>
<svg style="left:49.75px;top:604.434px" width="10.5" height="8.5"><use href="#fold" width="10.5" height="8.5"/></svg>
<span class="t" style="left:62.2px;top:603.284px;font-size:9px;transform:scaleX(0.7210);--w:6.50;color:#1a1a1a;">lib</span>
<svg style="left:60.75px;top:616.338px" width="10.5" height="8"><use href="#jar" width="10.5" height="8"/></svg>
<span class="t" style="left:73.2px;top:614.938px;font-size:9px;transform:scaleX(0.8346);--w:23.80;color:#1a1a1a;">axis.jar</span>
<svg style="left:60.75px;top:627.992px" width="10.5" height="8"><use href="#jar" width="10.5" height="8"/></svg>
<span class="t" style="left:73.2px;top:626.592px;font-size:9px;transform:scaleX(0.8331);--w:90.00;color:#1a1a1a;">commons-discovery-0.2.jar</span>
<svg style="left:60.75px;top:639.646px" width="10.5" height="8"><use href="#jar" width="10.5" height="8"/></svg>
<span class="t" style="left:73.2px;top:638.246px;font-size:9px;transform:scaleX(0.8355);--w:69.80;color:#1a1a1a;">commons-logging.jar</span>
<svg style="left:60.75px;top:651.3px" width="10.5" height="8"><use href="#jar" width="10.5" height="8"/></svg>
<span class="t" style="left:73.2px;top:649.9px;font-size:9px;transform:scaleX(0.8325);--w:30.40;color:#1a1a1a;">jaxrpc.jar</span>
<svg style="left:60.75px;top:662.954px" width="10.5" height="8"><use href="#jar" width="10.5" height="8"/></svg>
<span class="t" style="left:73.2px;top:661.554px;font-size:9px;transform:scaleX(0.8202);--w:23.80;color:#1a1a1a;">saaj.jar</span>
<svg style="left:60.75px;top:674.608px" width="10.5" height="8"><use href="#jar" width="10.5" height="8"/></svg>
<span class="t" style="left:73.2px;top:673.208px;font-size:9px;transform:scaleX(0.8103);--w:30.40;color:#1a1a1a;">wsdl4j.jar</span>
<span class="t" style="left:128.6px;top:428.474px;font-size:9px;transform:scaleX(0.7779);--w:40.10;color:#b0a070;">[jdk1.6.0_12]</span>
<div class="b" style="left:262.5px;top:50.5px;width:696px;height:507px;background:#d4d0c8;border:1px solid #8c9fd0;border-bottom:1.500px solid #8395c8;border-top-color:#9c988f;border-radius:5px 5px 0 0;"></div>
<div class="b" style="left:261px;top:52px;width:1.5px;height:644px;background:#dedbd4;"></div>
<svg style="left:266px;top:53px" width="8" height="10"><use href="#jfile" width="8" height="10"/></svg>
<span class="t" style="left:276.2px;top:52.3px;font-size:9px;transform:scaleX(0.7843);--w:26.30;color:#111;">test.java</span>
<svg style="left:318px;top:50.500px" width="90" height="15.500" viewBox="0 0 90 15.500"><defs><linearGradient id="tg1" x1="0" y1="0" x2="0" y2="1"><stop offset="0" stop-color="#f2f5fb"/><stop offset="1" stop-color="#a6b9df"/></linearGradient></defs><path d="M0.500 15.500v-15h50q5 0 8 4l5.500 7.500q2.500 3.500 7 3.500z" fill="url(#tg1)"/><path d="M0.500 15.500v-15h50q5 0 8 3.500l5.500 7.500q2.500 3.500 7 3.500" fill="none" stroke="#9c988f" stroke-width="1"/></svg>
<svg style="left:321.500px;top:53px" width="8" height="10"><use href="#css" width="8" height="10"/></svg>
<span class="t" style="left:331px;top:52.3px;font-size:9px;transform:scaleX(0.8246);--w:29.30;color:#111;">index.jsp</span>
<svg style="left:364.500px;top:55px" width="6" height="7" viewBox="0 0 6 7"><path d="M0.700 0.700l4.600 5.600M5.300 0.700l-4.600 5.600M0.700 0.700h1.600M3.700 0.700h1.600M0.700 6.300h1.600M3.700 6.300h1.600" stroke="#6a6a6a" stroke-width="0.700" fill="none"/></svg>
<svg style="left:938px;top:53px" width="18" height="8" viewBox="0 0 18 8"><rect x="0.500" y="0.500" width="5.500" height="2" fill="#fff" stroke="#555" stroke-width="0.700"/><rect x="11.500" y="1" width="5.500" height="5.500" fill="#fff" stroke="#444" stroke-width="0.800"/><path d="M11.500 1.700h5.500" stroke="#444" stroke-width="1"/></svg>
<div class="b" style="left:263.5px;top:65px;width:694px;height:1.5px;background:#7f9cd6;"></div>
<div class="b" style="left:263.5px;top:66.5px;width:7px;height:478.5px;background:#d6d2ca;"></div>
<div class="b" style="left:270.5px;top:66.5px;width:670.5px;height:478.5px;background:#fff;"></div>
<div class="b" style="left:263.5px;top:340px;width:7px;height:92.7px;background:#7b8fc4;"></div>
<div class="b" style="left:941px;top:66.5px;width:8.5px;height:478.5px;background:#eceae6;"></div>
<div class="btn" style="left:941px;top:67px;width:8.500px;height:10.500px"></div>
<svg style="left:943px;top:70.800px" width="4.500" height="3" viewBox="0 0 5 3"><path d="M0 3h5l-2.500-3z" fill="#000"/></svg>
<div class="btn" style="left:941px;top:376px;width:8.500px;height:45px"></div>
<div class="btn" style="left:941px;top:535px;width:8.500px;height:10px"></div>
<svg style="left:943px;top:538.500px" width="4.500" height="3" viewBox="0 0 5 3"><path d="M0 0h5l-2.500 3z" fill="#000"/></svg>
<div class="b" style="left:949.5px;top:66.5px;width:8px;height:489.5px;background:#d9d6cf;"></div>
<div class="b" style="left:951.5px;top:69.5px;width:4px;height:7px;background:#f5c518;border:0.500px solid #c89a10;"></div>
<div class="b" style="left:951px;top:173.7px;width:5.3px;height:3.4px;background:#fbe28a;"></div>
<div class="b" style="left:951px;top:180px;width:5.3px;height:3.4px;background:#fbe28a;"></div>
<div class="b" style="left:951px;top:216.3px;width:5.3px;height:3.4px;background:#fbe28a;"></div>
<div class="b" style="left:951px;top:328px;width:5px;height:2.7px;background:#fbe28a;"></div>
<div class="b" style="left:951px;top:332.7px;width:5px;height:2.7px;background:#fbe28a;"></div>
<div class="b" style="left:951px;top:337.3px;width:5px;height:2.7px;background:#fbe28a;"></div>
<div class="b" style="left:951px;top:342px;width:5px;height:2.7px;background:#fbe28a;"></div>
<div class="b" style="left:951px;top:368.2px;width:5.5px;height:6px;background:#fbe28a;"></div>
<div class="b" style="left:263.5px;top:545px;width:12.5px;height:11px;background:#d6d2ca;"></div>
<div class="b" style="left:276px;top:545px;width:665px;height:11px;background:#eceae6;"></div>
<div class="btn" style="left:276px;top:545px;width:9.500px;height:11px"></div>
<svg style="left:279px;top:548.300px" width="3" height="4.500" viewBox="0 0 3 5"><path d="M3 0v5l-3-2.500z" fill="#000"/></svg>
<div class="btn" style="left:285.500px;top:545px;width:369.500px;height:11px"></div>
<div class="btn" style="left:931.500px;top:545px;width:9.500px;height:11px"></div>
<svg style="left:935px;top:548.300px" width="3" height="4.500" viewBox="0 0 3 5"><path d="M0 0v5l3-2.500z" fill="#000"/></svg>
<div class="b" style="left:941px;top:545px;width:8.5px;height:11px;background:#d4d0c8;"></div>
<div class="b" style="left:422px;top:340px;width:518.4px;height:11.8px;background:#0a246a;"></div>
<div class="b" style="left:276.1px;top:351.5px;width:664.3px;height:69.6px;background:#0a246a;"></div>
<div class="b" style="left:276.1px;top:421px;width:169.501px;height:11.7px;background:#0a246a;"></div>
<div class="b" style="left:271px;top:66.5px;width:670px;height:478.5px;overflow:hidden">
<div class="c" style="left:133.14px;top:-4.69px;--w:265.23;--n:58"><span class="tg">&lt;table</span> <span class="an">border</span>=<span class="av">"1"</span> <span class="an">cellspacing</span>=<span class="av">"0"</span> <span class="an">class</span>=<span class="av">"biblio_table_02"</span><span class="tg">&gt;</span></div>
<div class="c" style="left:151.44px;top:6.97px;--w:18.29;--n:4"><span class="tg">&lt;tr</span><span class="tg">&gt;</span></div>
<div class="c" style="left:169.73px;top:18.62px;--w:164.63;--n:32"><span class="tg">&lt;th</span> <span class="an">scope</span>=<span class="av">"col"</span> <span class="an">width</span>=<span class="av">"8%"</span><span class="tg">&gt;</span><span class="k kc" style="width:18.29px">번호</span><span class="tg">&lt;/th</span><span class="tg">&gt;</span></div>
<div class="c" style="left:169.73px;top:30.28px;--w:141.76;--n:21"><span class="tg">&lt;th</span> <span class="an">scope</span>=<span class="av">"col"</span><span class="tg">&gt;</span><span class="k kc" style="width:45.73px">대표청구항</span><span class="tg">&lt;/th</span><span class="tg">&gt;</span></div>
<div class="c" style="left:151.44px;top:41.94px;--w:22.87;--n:5"><span class="tg">&lt;/tr</span><span class="tg">&gt;</span></div>
<div class="c" style="left:151.44px;top:53.60px;--w:210.36;--n:46"><span class="sd">&lt;%</span><span class="kw">for</span>(<span class="kw">int</span> i=0; i &lt;claimInfos.length ; i++){ <span class="sd">%&gt;</span></div>
<div class="c" style="left:151.44px;top:65.26px;--w:18.29;--n:4"><span class="tg">&lt;tr</span><span class="tg">&gt;</span></div>
<div class="c" style="left:169.73px;top:76.91px;--w:160.06;--n:35"><span class="tg">&lt;td</span> <span class="an">class</span>=<span class="av">"td_center"</span><span class="tg">&gt;</span><span class="sd">&lt;%</span>=i+1<span class="sd">%&gt;</span><span class="tg">&lt;/td</span><span class="tg">&gt;</span></div>
<div class="c" style="left:169.73px;top:88.57px;--w:228.65;--n:50"><span class="tg">&lt;td</span> <span class="an">class</span>=<span class="av">"f-l"</span><span class="tg">&gt;</span><span class="sd">&lt;%</span>=claimInfos[i].getClaim()<span class="sd">%&gt;</span><span class="tg">&lt;/td</span><span class="tg">&gt;</span></div>
<div class="c" style="left:151.44px;top:100.23px;--w:22.87;--n:5"><span class="tg">&lt;/tr</span><span class="tg">&gt;</span></div>
<div class="c" style="left:151.44px;top:111.89px;--w:22.87;--n:5"><span class="sd">&lt;%</span>}<span class="sd">%&gt;</span></div>
<div class="c" style="left:133.14px;top:123.55px;--w:36.58;--n:8"><span class="tg">&lt;/table</span><span class="tg">&gt;</span></div>
<div class="c" style="left:114.85px;top:135.20px;--w:27.44;--n:6"><span class="tg">&lt;/div</span><span class="tg">&gt;</span></div>
<div class="c" style="left:114.85px;top:158.52px;--w:68.59;--n:9"><span class="cm">&lt;!-- <span class="k kc" style="width:27.44px">출원인</span> --&gt;</span></div>
<div class="c" style="left:114.85px;top:170.18px;--w:128.04;--n:28"><span class="tg">&lt;div</span> <span class="an">class</span>=<span class="av">"detail"</span> <span class="an">id</span>=<span class="av">'AP'</span><span class="tg">&gt;</span></div>
<div class="c" style="left:133.14px;top:181.84px;--w:182.92;--n:34"><span class="tg">&lt;span</span> <span class="an">class</span>=<span class="av">"detail_bold"</span><span class="tg">&gt;</span><span class="k kc" style="width:27.44px">출원인</span> <span class="tg">&lt;/span</span><span class="tg">&gt;</span></div>
<div class="c" style="left:133.14px;top:193.49px;--w:251.52;--n:55"><span class="tg">&lt;table</span> <span class="an">border</span>=<span class="av">"1"</span> <span class="an">cellspacing</span>=<span class="av">"0"</span> <span class="an">class</span>=<span class="av">"biblio_table"</span><span class="tg">&gt;</span></div>
<div class="c" style="left:151.44px;top:205.15px;--w:18.29;--n:4"><span class="tg">&lt;tr</span><span class="tg">&gt;</span></div>
<div class="c" style="left:169.73px;top:216.81px;--w:164.63;--n:32"><span class="tg">&lt;th</span> <span class="an">scope</span>=<span class="av">"col"</span> <span class="an">width</span>=<span class="av">"8%"</span><span class="tg">&gt;</span><span class="k kc" style="width:18.29px">번호</span><span class="tg">&lt;/th</span><span class="tg">&gt;</span></div>
<div class="c" style="left:169.73px;top:228.47px;--w:196.64;--n:35"><span class="tg">&lt;th</span> <span class="an">scope</span>=<span class="av">"col"</span> <span class="an">width</span>=<span class="av">"24%"</span><span class="tg">&gt;</span><span class="k kc" style="width:18.29px">이름</span>(<span class="k kc" style="width:18.29px">코드</span>)<span class="tg">&lt;/th</span><span class="tg">&gt;</span></div>
<div class="c" style="left:169.73px;top:240.13px;--w:114.33;--n:21"><span class="tg">&lt;th</span> <span class="an">scope</span>=<span class="av">"col"</span><span class="tg">&gt;</span><span class="k kc" style="width:18.29px">주소</span><span class="tg">&lt;/th</span><span class="tg">&gt;</span></div>
<div class="c" style="left:169.73px;top:251.78px;--w:169.20;--n:33"><span class="tg">&lt;th</span> <span class="an">scope</span>=<span class="av">"col"</span> <span class="an">width</span>=<span class="av">"12%"</span><span class="tg">&gt;</span><span class="k kc" style="width:18.29px">국적</span><span class="tg">&lt;/th</span><span class="tg">&gt;</span></div>
<div class="c" style="left:151.44px;top:263.44px;--w:22.87;--n:5"><span class="tg">&lt;/tr</span><span class="tg">&gt;</span></div>
<div class="c sel" style="left:151.44px;top:275.10px;--w:228.65;--n:50"><span class="sd">&lt;%</span><span class="kw">for</span>(<span class="kw">int</span> i=0; i &lt;applicantInfos.length ; i++){ <span class="sd">%&gt;</span></div>
<div class="c sel" style="left:151.44px;top:286.76px;--w:18.29;--n:4"><span class="tg">&lt;tr</span><span class="tg">&gt;</span></div>
<div class="c sel" style="left:169.73px;top:298.42px;--w:160.06;--n:35"><span class="tg">&lt;td</span> <span class="an">class</span>=<span class="av">"td_center"</span><span class="tg">&gt;</span><span class="sd">&lt;%</span>=i+1<span class="sd">%&gt;</span><span class="tg">&lt;/td</span><span class="tg">&gt;</span></div>
<div class="c sel" style="left:169.73px;top:310.07px;--w:425.29;--n:93"><span class="tg">&lt;td</span> <span class="an">class</span>=<span class="av">"f-l"</span><span class="tg">&gt;</span><span class="sd">&lt;%</span>=applicantInfos[i].getName()<span class="sd">%&gt;</span>&amp;nbsp;(<span class="sd">&lt;%</span>=applicantInfos[i].getCode()<span class="sd">%&gt;</span>)<span class="tg">&lt;/td</span><span class="tg">&gt;</span></div>
<div class="c sel" style="left:169.73px;top:321.73px;--w:283.53;--n:62"><span class="tg">&lt;td</span> <span class="an">class</span>=<span class="av">"f-l"</span><span class="tg">&gt;</span><span class="sd">&lt;%</span>=applicantInfos[i].getAddress()<span class="sd">%&gt;</span>&amp;nbsp;<span class="tg">&lt;/td</span><span class="tg">&gt;</span></div>
<div class="c sel" style="left:169.73px;top:333.39px;--w:310.96;--n:68"><span class="tg">&lt;td</span> <span class="an">class</span>=<span class="av">"td_center"</span><span class="tg">&gt;</span><span class="sd">&lt;%</span>=applicantInfos[i].getCountry()<span class="sd">%&gt;</span>&amp;nbsp;<span class="tg">&lt;/td</span><span class="tg">&gt;</span></div>
<div class="c sel" style="left:151.44px;top:345.05px;--w:22.87;--n:5"><span class="tg">&lt;/tr</span><span class="tg">&gt;</span></div>
<div class="c sel" style="left:151.44px;top:356.71px;--w:22.87;--n:5"><span class="sd">&lt;%</span>}<span class="sd">%&gt;</span></div>
<div class="c" style="left:133.14px;top:368.36px;--w:36.58;--n:8"><span class="tg">&lt;/table</span><span class="tg">&gt;</span></div>
<div class="c" style="left:114.85px;top:380.02px;--w:27.44;--n:6"><span class="tg">&lt;/div</span><span class="tg">&gt;</span></div>
<div class="c" style="left:114.85px;top:415.00px;--w:100.61;--n:10"><span class="cm">&lt;!-- <span class="k kc" style="width:27.44px">발명자</span>/<span class="k kc" style="width:27.44px">고안자</span> --&gt;</span></div>
<div class="c" style="left:114.85px;top:426.65px;--w:128.04;--n:28"><span class="tg">&lt;div</span> <span class="an">class</span>=<span class="av">"detail"</span> <span class="an">id</span>=<span class="av">'IV'</span><span class="tg">&gt;</span></div>
<div class="c" style="left:133.14px;top:438.31px;--w:187.49;--n:35"><span class="tg">&lt;span</span> <span class="an">class</span>=<span class="av">"detail_bold"</span><span class="tg">&gt;</span> <span class="k kc" style="width:27.44px">발명자</span> <span class="tg">&lt;/span</span><span class="tg">&gt;</span></div>
<div class="c" style="left:133.14px;top:449.97px;--w:251.52;--n:55"><span class="tg">&lt;table</span> <span class="an">border</span>=<span class="av">"1"</span> <span class="an">cellspacing</span>=<span class="av">"0"</span> <span class="an">class</span>=<span class="av">"biblio_table"</span><span class="tg">&gt;</span></div>
<div class="c" style="left:151.44px;top:461.63px;--w:18.29;--n:4"><span class="tg">&lt;tr</span><span class="tg">&gt;</span></div>
<div class="c" style="left:169.73px;top:473.29px;--w:164.63;--n:32"><span class="tg">&lt;th</span> <span class="an">scope</span>=<span class="av">"col"</span> <span class="an">width</span>=<span class="av">"8%"</span><span class="tg">&gt;</span><span class="k kc" style="width:18.29px">번호</span><span class="tg">&lt;/th</span><span class="tg">&gt;</span></div>
</div>
<div class="b" style="left:262.5px;top:559.5px;width:696px;height:137px;background:#d4d0c8;border:1px solid #9c988f;border-radius:5px 5px 0 0;"></div>
<div class="b" style="left:309.4px;top:562px;width:1px;height:13px;background:#b4b0a6;"></div>
<div class="b" style="left:345px;top:562px;width:1px;height:13px;background:#b4b0a6;"></div>
<div class="b" style="left:393px;top:562px;width:1px;height:13px;background:#b4b0a6;"></div>
<div class="b" style="left:434.5px;top:562px;width:1px;height:13px;background:#b4b0a6;"></div>
<div class="b" style="left:519px;top:562px;width:1px;height:13px;background:#b4b0a6;"></div>
<span class="t" style="left:276.2px;top:562.4px;font-size:9px;transform:scaleX(0.8023);--w:30.50;color:#111;">Problems</span>
<span class="t" style="left:323.2px;top:562.4px;font-size:9px;transform:scaleX(0.8386);--w:19.30;color:#111;">Tasks</span>
<span class="t" style="left:358.7px;top:562.4px;font-size:9px;transform:scaleX(0.7921);--w:32.50;color:#111;">Properties</span>
<span class="t" style="left:407.5px;top:562.4px;font-size:9px;transform:scaleX(0.7899);--w:24.50;color:#111;">Servers</span>
<span class="t" style="left:447.5px;top:562.4px;font-size:9px;transform:scaleX(0.7984);--w:68.70;color:#111;">Data Source Explorer</span>
<span class="t" style="left:533px;top:562.4px;font-size:9px;transform:scaleX(0.7707);--w:27.00;color:#111;">Snippets</span>
<svg style="left:563.500px;top:560px" width="70" height="16.500" viewBox="0 0 70 16.500"><path d="M0.500 16.500v-16h46q5 0 8 4l6 9q2 3 6 3z" fill="#f7f6f2"/><path d="M0.500 16.500v-16h46q5 0 8 4l6 9q2 3 6 3" fill="none" stroke="#9c988f" stroke-width="1"/></svg>
<div class="b" style="left:263.5px;top:575.5px;width:300px;height:1px;background:#9c988f;"></div>
<div class="b" style="left:629px;top:575.5px;width:329px;height:1px;background:#9c988f;"></div>
<span class="t" style="left:577px;top:562.4px;font-size:9px;transform:scaleX(0.7871);--w:26.00;color:#111;">Console</span>
<svg style="left:608px;top:565px" width="6" height="7" viewBox="0 0 6 7"><path d="M0.700 0.700l4.600 5.600M5.300 0.700l-4.600 5.600M0.700 0.700h1.600M3.700 0.700h1.600M0.700 6.300h1.600M3.700 6.300h1.600" stroke="#6a6a6a" stroke-width="0.700" fill="none"/></svg>
<svg style="left:263.3px;top:563.3px" width="10" height="10" viewBox="0 0 12 12"><rect x="2" y="0.500" width="7.500" height="11" fill="#fff" stroke="#9aa6c0" stroke-width="0.800"/><circle cx="4.500" cy="3.500" r="1.700" fill="#e03030"/><path d="M3 8.500l1.700-3 1.700 3z" fill="#f0b020"/><rect x="3" y="9" width="3" height="2" fill="#3a6ac8"/></svg>
<svg style="left:310.8px;top:563.3px" width="10" height="10" viewBox="0 0 12 12"><rect x="1.500" y="2" width="9" height="8.500" fill="#fff" stroke="#7f9cd6" stroke-width="0.800"/><path d="M3 6.500l2 2 4.500-6" stroke="#3a6ac8" stroke-width="1.300" fill="none"/><circle cx="9.500" cy="9.500" r="1.600" fill="#f0b020"/></svg>
<svg style="left:346.7px;top:563.3px" width="10" height="10" viewBox="0 0 12 12"><rect x="1" y="2" width="10" height="8" fill="#eef2fa" stroke="#8a98b8" stroke-width="0.800"/><rect x="1" y="2" width="10" height="2" fill="#9aaad0"/><path d="M2.500 6h7M2.500 8h7" stroke="#b0bcd8" stroke-width="0.800"/></svg>
<svg style="left:395.8px;top:563.3px" width="10" height="10" viewBox="0 0 12 12"><path d="M1 8l2-3 2 3z" fill="#f0b020"/><rect x="5" y="2" width="3" height="8" fill="#5a8a4a"/><rect x="8.500" y="4" width="2.500" height="6" fill="#7a9ad0"/><circle cx="3.500" cy="3" r="1.500" fill="#4a9a4a"/></svg>
<svg style="left:435.5px;top:562.8px" width="11" height="11" viewBox="0 0 12 12"><rect x="1" y="1" width="10" height="10" fill="#7aa83a" stroke="#4a7a1a" stroke-width="0.800"/><path d="M1 4.500h10M1 7.500h10M4.500 1v10M8 1v10" stroke="#f0e060" stroke-width="0.900"/></svg>
<svg style="left:521px;top:563.3px" width="10" height="10" viewBox="0 0 12 12"><path d="M2 5l4-3 4 3v5h-8z" fill="#eef2fa" stroke="#8a98b8" stroke-width="0.800"/><path d="M3.500 9.500l2-4 3 2" stroke="#e08030" stroke-width="1" fill="none"/></svg>
<svg style="left:565px;top:563.3px" width="10" height="10" viewBox="0 0 12 12"><rect x="1" y="1.500" width="10" height="8.500" rx="1" fill="#3a6ad0" stroke="#1c3a90" stroke-width="0.800"/><rect x="2.500" y="3" width="7" height="4.500" fill="#eaf0ff"/><path d="M3.500 11h5" stroke="#1c3a90" stroke-width="1"/></svg>
<svg style="left:775.75px;top:563.35px" width="10.5" height="10.5" viewBox="0 0 12 12"><rect x="3.500" y="3.500" width="5" height="5" fill="#d8b8c4"/></svg>
<svg style="left:790.05px;top:563.35px" width="10.5" height="10.5" viewBox="0 0 12 12"><path d="M2.500 2.500l7 7M9.500 2.500l-7 7" stroke="#6a6a6a" stroke-width="2"/></svg>
<svg style="left:804.25px;top:563.35px" width="10.5" height="10.5" viewBox="0 0 12 12"><path d="M1.500 1.500l5 5M6.500 1.500l-5 5M5.500 5.500l5 5M10.500 5.500l-5 5" stroke="#7a7a7a" stroke-width="1.700"/></svg>
<div class="b" style="left:817.5px;top:562px;width:1px;height:13px;background:#9c988f;"></div>
<div class="b" style="left:818.5px;top:562px;width:1px;height:13px;background:#fff;"></div>
<svg style="left:822.25px;top:563.35px" width="10.5" height="10.5" viewBox="0 0 12 12"><path d="M2 1h5l2 2v8h-7z" fill="#fff" stroke="#8a98b8" stroke-width="0.800"/><path d="M6.500 6.500l4 4M10.500 6.500l-4 4" stroke="#555" stroke-width="1.300"/></svg>
<svg style="left:835.55px;top:563.35px" width="10.5" height="10.5" viewBox="0 0 12 12"><path d="M2 1h5l2 2v8h-7z" fill="#fff" stroke="#8a98b8" stroke-width="0.800"/><rect x="5" y="7" width="5.500" height="4.500" fill="#f0b020" stroke="#a87010" stroke-width="0.500"/><path d="M6 7v-1.500q1.700-1.700 3.400 0v1.500" stroke="#a87010" stroke-width="0.800" fill="none"/></svg>
<div class="b" style="left:848.4px;top:561.5px;width:13.6px;height:14px;background:#e9e7e1;border:1px solid;border-color:#808080 #fff #fff #808080;"></div>
<div class="b" style="left:862.1px;top:561.5px;width:13.6px;height:14px;background:#e9e7e1;border:1px solid;border-color:#808080 #fff #fff #808080;"></div>
<svg style="left:849.95px;top:563.35px" width="10.5" height="10.5" viewBox="0 0 12 12"><rect x="2.500" y="1.500" width="8" height="6" fill="#dfe8fa" stroke="#3a5ab0" stroke-width="0.900"/><rect x="1" y="4.500" width="6" height="5" fill="#f4f7ff" stroke="#3a5ab0" stroke-width="0.900"/><path d="M2 11h4" stroke="#3a5ab0" stroke-width="0.900"/></svg>
<svg style="left:863.65px;top:563.35px" width="10.5" height="10.5" viewBox="0 0 12 12"><rect x="2.500" y="1.500" width="8" height="6" fill="#dfe8fa" stroke="#3a5ab0" stroke-width="0.900"/><rect x="1" y="4.500" width="6" height="5" fill="#f4f7ff" stroke="#3a5ab0" stroke-width="0.900"/><circle cx="8" cy="4" r="1.800" fill="#e03030"/></svg>
<div class="b" style="left:877.5px;top:562px;width:1px;height:13px;background:#9c988f;"></div>
<div class="b" style="left:878.5px;top:562px;width:1px;height:13px;background:#fff;"></div>
<svg style="left:881.75px;top:563.35px" width="10.5" height="10.5" viewBox="0 0 12 12"><rect x="1.500" y="4" width="7" height="6" fill="#eef2fa" stroke="#3a5ab0" stroke-width="0.900"/><path d="M5 6l5-4.500" stroke="#2a8a3a" stroke-width="1.600"/><path d="M8 1h3v3z" fill="#2a8a3a"/></svg>
<svg style="left:895.75px;top:563.35px" width="10.5" height="10.5" viewBox="0 0 12 12"><rect x="1.500" y="1.500" width="9" height="7" fill="#e4e4e4" stroke="#6a6a6a" stroke-width="0.900"/><rect x="3.500" y="3.500" width="5" height="3" fill="#fff" stroke="#888" stroke-width="0.500"/><path d="M3.500 10.500h5" stroke="#6a6a6a" stroke-width="1"/></svg>
<svg style="left:909.500px;top:567.500px" width="3.500" height="2.200" viewBox="0 0 5 3"><path d="M0 0h5l-2.500 3z" fill="#8a867e"/></svg>
<svg style="left:915.75px;top:563.35px" width="10.5" height="10.5" viewBox="0 0 12 12"><rect x="1.500" y="2.500" width="8.500" height="8" fill="#fff" stroke="#8a98b8" stroke-width="0.800"/><rect x="1.500" y="2.500" width="8.500" height="2" fill="#7f9cd6"/><path d="M9.500 0l0.700 1.500 1.600 0.200-1.200 1.100 0.300 1.600-1.400-0.800-1.400 0.800 0.300-1.600-1.200-1.100 1.600-0.200z" fill="#f0c020"/></svg>
<svg style="left:930.200px;top:567.500px" width="3.500" height="2.200" viewBox="0 0 5 3"><path d="M0 0h5l-2.500 3z" fill="#222"/></svg>
<svg style="left:938px;top:562.500px" width="18" height="8" viewBox="0 0 18 8"><rect x="0.500" y="0.500" width="5.500" height="2" fill="#fff" stroke="#555" stroke-width="0.700"/><rect x="11.500" y="1" width="5.500" height="5.500" fill="#fff" stroke="#444" stroke-width="0.800"/><path d="M11.500 1.700h5.500" stroke="#444" stroke-width="1"/></svg>
<span class="t" style="left:264.5px;top:576px;font-size:9px;transform:scaleX(0.7946);--w:335.90;color:#111;">&lt;terminated&gt; test [Java Application] C:₩Program Files₩Java₩jdk1.6.0_12₩bin₩javaw.exe (2010. 1. 16.</span>
<span class="k" style="position:absolute;left:604.700px;top:576.500px;width:12.500px;color:#111;font-size:7px;line-height:10.7px;letter-spacing:-0.8px">오후</span>
<span class="t" style="left:619.7px;top:576px;font-size:9px;transform:scaleX(0.7257);--w:27.60;color:#111;">10:01:57)</span>
<div class="b" style="left:263.5px;top:587.5px;width:685px;height:96px;background:#fff;"></div>
<div class="b" style="left:948.5px;top:587.5px;width:9px;height:96px;background:#eceae6;"></div>
<div class="btn" style="left:948.500px;top:588px;width:9px;height:10px"></div>
<svg style="left:950.800px;top:591.500px" width="4.500" height="3" viewBox="0 0 5 3"><path d="M0 3h5l-2.500-3z" fill="#8a867e"/></svg>
<div class="btn" style="left:948.500px;top:673px;width:9px;height:10.500px"></div>
<svg style="left:950.800px;top:676.800px" width="4.500" height="3" viewBox="0 0 5 3"><path d="M0 0h5l-2.500 3z" fill="#8a867e"/></svg>
<div class="b" style="left:263.5px;top:683.5px;width:685px;height:11.5px;background:#eceae6;"></div>
<div class="btn" style="left:263.500px;top:683.500px;width:9.500px;height:11px"></div>
<svg style="left:267px;top:686.800px" width="3" height="4.500" viewBox="0 0 3 5"><path d="M3 0v5l-3-2.500z" fill="#8a867e"/></svg>
<div class="btn" style="left:939px;top:683.500px;width:9.500px;height:11px"></div>
<svg style="left:942.500px;top:686.800px" width="3" height="4.500" viewBox="0 0 3 5"><path d="M0 0h5v0l-2 2.500 2 2.500h-5z" fill="none"/><path d="M0 0v5l3-2.500z" fill="#8a867e"/></svg>
<div class="b" style="left:948.5px;top:683.5px;width:9px;height:11.5px;background:#d4d0c8;"></div>
<div class="b" style="left:263.7px;top:611.1px;width:283.3px;height:11.6px;background:#0a246a;"></div>
<div class="c" style="left:263.700px;top:589.3px;color:#ff0000;--w:358.38;--n:75">2010. 1. 16 <span class="k" style="width:15.40px;font-size:8px;line-height:8.4px;letter-spacing:-0.3px">오후</span> 10:01:58 org.apache.axis.utils.JavaUtils isAttachmentSupported</div>
<div class="c" style="left:263.700px;top:600.7px;color:#ff0000;--w:635.15;--n:135"><span class="k" style="width:17.80px;font-size:8.9px;line-height:7.6px">경고</span>: Unable to find required classes (javax.activation.DataHandler and javax.mail.internet.MimeMultipart). Attachment support is disabled.</div>
<span class="k ka" style="position:absolute;left:264.7px;top:611.100px;width:41px;color:#fff;letter-spacing:-0.9px">서울특별시</span>
<span class="k ka" style="position:absolute;left:307.4px;top:611.100px;width:24.2px;color:#fff;letter-spacing:-1.1px">종로구</span>
<span class="k ka" style="position:absolute;left:334.2px;top:611.100px;width:25.5px;color:#fff;letter-spacing:-0.67px">당주동</span>
<span class="c" style="left:364.5px;top:611.600px;color:#fff;letter-spacing:-0.700px">*</span>
<span class="k ka" style="position:absolute;left:368.5px;top:611.100px;width:16.7px;color:#fff;letter-spacing:-0.9px">번지</span>
<span class="k ka" style="position:absolute;left:388.8px;top:611.100px;width:30.7px;color:#fff;letter-spacing:-1.45px">로얄빌딩</span>
<span class="c" style="left:425.3px;top:611.600px;color:#fff;letter-spacing:-0.700px">****</span>
<span class="k ka" style="position:absolute;left:441.5px;top:611.100px;width:6.7px;color:#fff">호</span>
<span class="c" style="left:452.5px;top:611.600px;color:#fff;letter-spacing:-0.700px">(</span>
<span class="k ka" style="position:absolute;left:456.4px;top:611.100px;width:22.4px;color:#fff;letter-spacing:-1.7px">강명구</span>
<span class="k ka" style="position:absolute;left:483px;top:611.100px;width:59.7px;color:#fff;letter-spacing:-0.54px">특허법률사무소</span>
<span class="c" style="left:543.2px;top:611.600px;color:#fff;letter-spacing:-0.700px">)</span>
<div class="b" style="left:4.5px;top:699.5px;width:1px;height:16px;background:#9c988f;"></div>
<div class="b" style="left:5.5px;top:699.5px;width:1px;height:16px;background:#fff;"></div>
<div class="b" style="left:545.5px;top:699.5px;width:1px;height:16px;background:#9c988f;"></div>
<div class="b" style="left:546.5px;top:699.5px;width:1px;height:16px;background:#fff;"></div>
<div class="b" style="left:603.5px;top:699.5px;width:1px;height:16px;background:#9c988f;"></div>
<div class="b" style="left:604.5px;top:699.5px;width:1px;height:16px;background:#fff;"></div>
<div class="b" style="left:658.5px;top:699.5px;width:1px;height:16px;background:#9c988f;"></div>
<div class="b" style="left:659.5px;top:699.5px;width:1px;height:16px;background:#fff;"></div>
<div class="b" style="left:716.5px;top:699.5px;width:1px;height:16px;background:#9c988f;"></div>
<div class="b" style="left:717.5px;top:699.5px;width:1px;height:16px;background:#fff;"></div>
<div class="b" style="left:884.5px;top:699.5px;width:1px;height:16px;background:#9c988f;"></div>
<div class="b" style="left:885.5px;top:699.5px;width:1px;height:16px;background:#fff;"></div>
<div class="b" style="left:887.5px;top:699.5px;width:1px;height:16px;background:#9c988f;"></div>
<div class="b" style="left:888.5px;top:699.5px;width:1px;height:16px;background:#fff;"></div>
<div class="b" style="left:904px;top:699.5px;width:1px;height:16px;background:#9c988f;"></div>
<div class="b" style="left:905px;top:699.5px;width:1px;height:16px;background:#fff;"></div>
<svg style="left:6px;top:701px" width="11" height="11" viewBox="0 0 12 12"><rect x="2" y="2" width="4.500" height="8" fill="#fff" stroke="#5a7ac0" stroke-width="1"/><rect x="2" y="2" width="4.500" height="2" fill="#5a7ac0"/><path d="M9.500 0.500l0.700 1.500 1.600 0.200-1.200 1.100 0.300 1.600-1.400-0.800-1.400 0.800 0.300-1.600-1.200-1.100 1.600-0.200z" fill="#f0c020"/></svg>
<svg style="left:44.500px;top:703.500px" width="9" height="7" viewBox="0 0 9 7"><path d="M3 0.500l-2.500 3 2.500 3M6 0.500l2.500 3-2.500 3" stroke="#4a8ae0" stroke-width="1.200" fill="none"/></svg>
<span class="t" style="left:57px;top:701.2px;font-size:9px;transform:scaleX(0.8625);--w:171.30;color:#111;">html/body/table/tr/td/table/div/div/table/jsp:scriptlet</span>
<span class="t" style="left:550px;top:701.2px;font-size:9px;transform:scaleX(0.7456);--w:24.50;color:#111;">Writable</span>
<span class="t" style="left:609px;top:701.2px;font-size:9px;transform:scaleX(0.8161);--w:40.00;color:#111;">Smart Insert</span>
<span class="t" style="left:664px;top:701.2px;font-size:9px;transform:scaleX(0.7685);--w:25.00;color:#111;">301 : 38</span>
<svg style="left:891.5px;top:700.3px" width="11" height="11" viewBox="0 0 12 12"><path d="M1 4h6.500v6h-6.500z" fill="#f0c860" stroke="#a88020" stroke-width="0.700"/><path d="M5 6.500h5v4h-5z" fill="#f4d88a" stroke="#a88020" stroke-width="0.700"/><path d="M3 4v-1.500q1.500-1.500 3 0v1.500" fill="none" stroke="#888" stroke-width="0.800"/></svg>
<svg style="left:908.5px;top:699.8px" width="11" height="12" viewBox="0 0 12 12"><circle cx="6" cy="4.500" r="3.800" fill="#fff8d0" stroke="#c8a020" stroke-width="0.900"/><rect x="4.500" y="8.500" width="3" height="3" fill="#8a9ab8"/></svg>
<svg style="left:921.5px;top:700.3px" width="11" height="11" viewBox="0 0 12 12"><rect x="1" y="2" width="10" height="8.500" fill="#f4f7ff" stroke="#6a7aa0" stroke-width="0.900"/><path d="M2.500 8.500l2.500-3 2 2 1.500-1.500 2 2.500z" fill="#4a9a4a"/><path d="M3 4.500l5 0" stroke="#3a5ab0" stroke-width="1"/></svg>
<svg style="left:934.5px;top:700.3px" width="11" height="11" viewBox="0 0 12 12"><circle cx="4" cy="4" r="2.800" fill="#3a6ad0"/><circle cx="8" cy="3.500" r="2.500" fill="#f0c020"/><circle cx="6.500" cy="8" r="2.800" fill="#4aa040"/></svg>
<svg style="left:947.5px;top:700.3px" width="11" height="11" viewBox="0 0 12 12"><path d="M6 0.500l2 3.500 3.500 2-3.500 2-2 3.500-2-3.500-3.500-2 3.500-2z" fill="#fbe28a" stroke="#e0a820" stroke-width="0.900"/></svg>
<div class="b" style="left:1px;top:715.5px;width:959px;height:4px;background:#dedbd5;"></div>
<script>
(function(){try{
var W=function(e){return e.getBoundingClientRect().width},P=function(e,k){return parseFloat(e.style.getPropertyValue(k))};
[].forEach.call(document.querySelectorAll('.t'),function(e){var w=P(e,'--w');if(!w)return;if(Math.abs(W(e)-w)<0.6)return;var t=e.style.transform;e.style.transform='none';var n=W(e);e.style.transform=n>0?'scaleX('+(w/n).toFixed(4)+')':t;});
[].forEach.call(document.querySelectorAll('.c'),function(e){var w=P(e,'--w'),n=P(e,'--n');if(!w||!n)return;var c=W(e);if(Math.abs(c-w)<1)return;e.style.letterSpacing=((w-c)/n).toFixed(3)+'px';});
}catch(x){}})();
</script>
</body></html>
